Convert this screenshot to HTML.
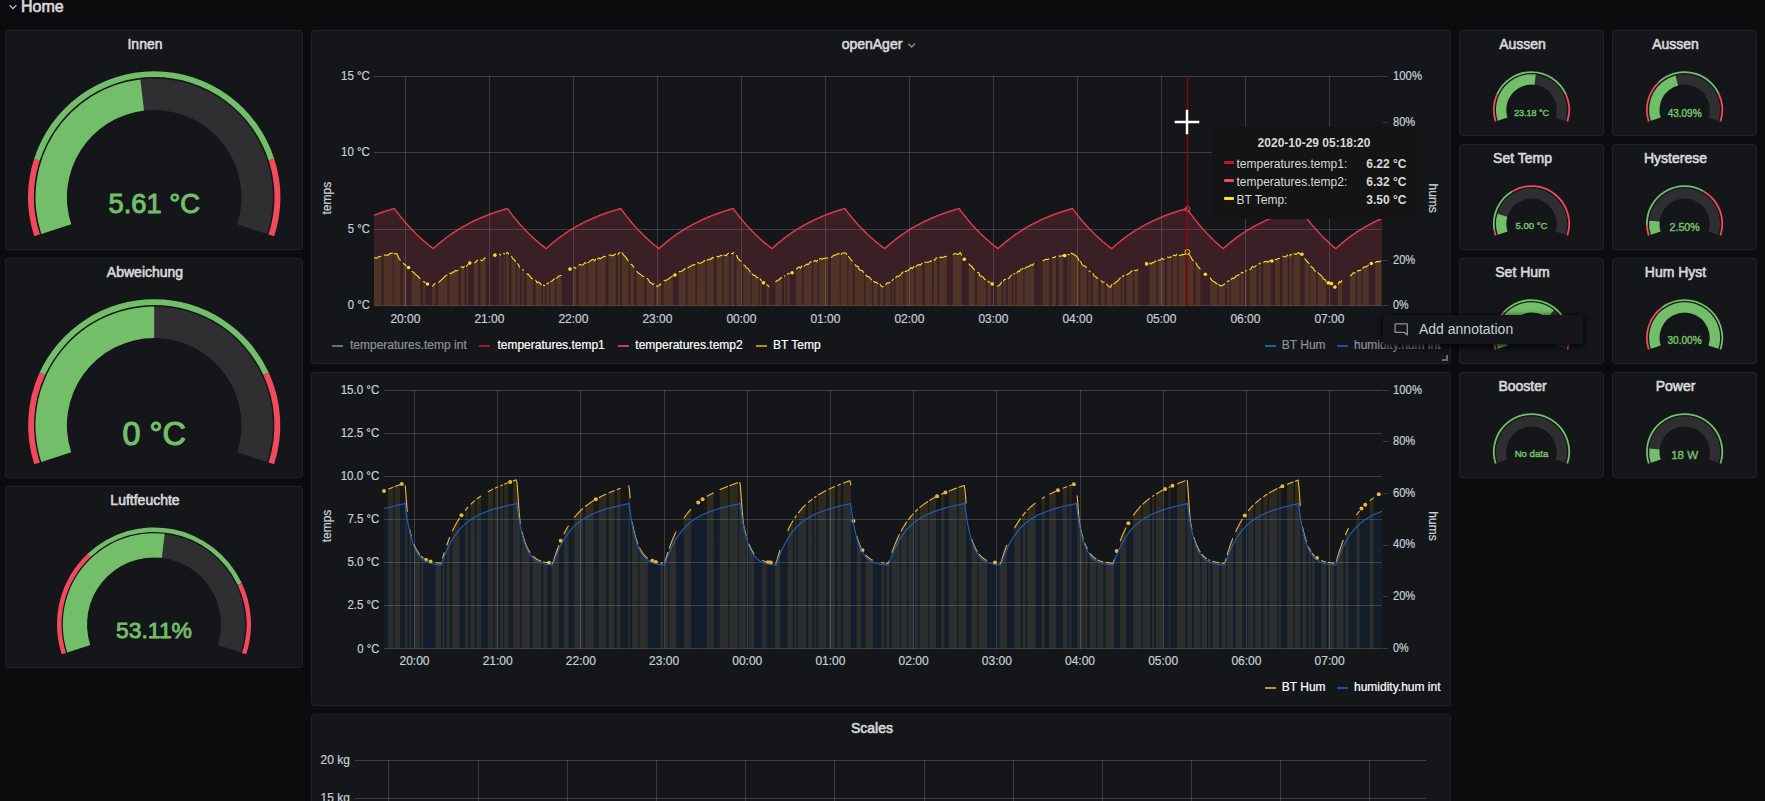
<!DOCTYPE html><html lang="en"><head><meta charset="utf-8"><title>openAger - Grafana</title><style>

html,body{margin:0;padding:0}
body{width:1765px;height:801px;overflow:hidden;background:#0b0c0e;font-family:"Liberation Sans", Arial, sans-serif;color:#d8d9da;position:relative;font-size:14px}
.panel{position:absolute;box-sizing:border-box;background:#141619;border:1px solid #202226;border-radius:3px;overflow:hidden}
.panel svg.pg{position:absolute;left:-1px;top:-1px;font-family:"Liberation Sans", Arial, sans-serif}
.ptitle{position:absolute;top:-1px;height:28px;line-height:29px;transform:translateX(-50%);white-space:nowrap;font-size:14px;color:#d8d9da;-webkit-text-stroke:0.6px #d8d9da;z-index:2}
.ptitle .caret{position:absolute;right:-13.5px;top:12.8px}
.row-title{position:absolute;left:21px;top:-3.5px;font-size:16px;line-height:20px;color:#d8d9da;-webkit-text-stroke:0.65px #d8d9da}
.legend{position:absolute;font-size:12px;line-height:16px;white-space:nowrap;color:#fff;-webkit-text-stroke:0.2px currentColor}
.legend span.i{position:absolute;height:2px;width:11px;opacity:.8}
.legend span.t{position:absolute}
.dim{color:#8e9297}
.tr{position:absolute;left:0;right:0;height:16px;line-height:16px}.tr i{position:absolute;left:12px;top:5px;width:10px;height:3px;border-radius:1px}.tr span{position:absolute;left:24.5px}.tr b{position:absolute;right:9.5px}

</style></head><body>
<svg style="position:absolute;left:9px;top:4px" width="9" height="6" viewBox="0 0 9 6"><path d="M0.6 1.1L4 4.6L7.4 1.1" fill="none" stroke="#c7d0d9" stroke-width="1.25"/></svg>
<div class="row-title">Home</div>
<div class="panel " style="left:5px;top:30px;width:298px;height:220px"><div class="ptitle" style="left:139px">Innen</div><svg class="pg" width="298" height="220" viewBox="5 30 298 220"><path d="M34.27 236.27A126.1 126.1 0 0 1 34.14 158.75L39.75 160.56A120.2 120.2 0 0 0 39.88 234.44Z" fill="#F2495C"/><path d="M34.14 158.75A126.1 126.1 0 0 1 274.26 158.75L268.65 160.56A120.2 120.2 0 0 0 39.75 160.56Z" fill="#73BF69"/><path d="M274.26 158.75A126.1 126.1 0 0 1 274.13 236.27L268.52 234.44A120.2 120.2 0 0 0 268.65 160.56Z" fill="#F2495C"/><path d="M41.31 233.98A118.7 118.7 0 1 1 267.09 233.98L237.23 224.28A87.3 87.3 0 1 0 71.17 224.28Z" fill="#2f2f32"/><path d="M41.31 233.98A118.7 118.7 0 0 1 140.36 79.41L144.02 110.6A87.3 87.3 0 0 0 71.17 224.28Z" fill="#73BF69"/><text x="154.2" y="213.1" text-anchor="middle" font-size="27.3" font-weight="normal" fill="#73BF69" stroke="#73BF69" stroke-width="1">5.61 °C</text></svg></div>
<div class="panel " style="left:5px;top:258px;width:298px;height:220px"><div class="ptitle" style="left:139px">Abweichung</div><svg class="pg" width="298" height="220" viewBox="5 258 298 220"><path d="M34.27 464.27A126.1 126.1 0 0 1 39.64 372.61L45 375.07A120.2 120.2 0 0 0 39.88 462.44Z" fill="#F2495C"/><path d="M39.64 372.61A126.1 126.1 0 0 1 268.76 372.61L263.4 375.07A120.2 120.2 0 0 0 45 375.07Z" fill="#73BF69"/><path d="M268.76 372.61A126.1 126.1 0 0 1 274.13 464.27L268.52 462.44A120.2 120.2 0 0 0 263.4 375.07Z" fill="#F2495C"/><path d="M41.31 461.98A118.7 118.7 0 1 1 267.09 461.98L237.23 452.28A87.3 87.3 0 1 0 71.17 452.28Z" fill="#2f2f32"/><path d="M41.31 461.98A118.7 118.7 0 0 1 154.2 306.6L154.2 338A87.3 87.3 0 0 0 71.17 452.28Z" fill="#73BF69"/><text x="154.2" y="444.6" text-anchor="middle" font-size="32.3" font-weight="normal" fill="#73BF69" stroke="#73BF69" stroke-width="1.15">0 °C</text></svg></div>
<div class="panel " style="left:5px;top:486px;width:298px;height:182px"><div class="ptitle" style="left:139px">Luftfeuchte</div><svg class="pg" width="298" height="182" viewBox="5 486 298 182"><path d="M61.75 654.37A97 97 0 0 1 87.6 553.69L90.68 556.97A92.5 92.5 0 0 0 66.03 652.98Z" fill="#F2495C"/><path d="M87.6 553.69A97 97 0 0 1 241.77 583.1L237.7 585.02A92.5 92.5 0 0 0 90.68 556.97Z" fill="#73BF69"/><path d="M241.77 583.1A97 97 0 0 1 246.25 654.37L241.97 652.98A92.5 92.5 0 0 0 237.7 585.02Z" fill="#F2495C"/><path d="M67.26 652.58A91.2 91.2 0 1 1 240.74 652.58L217.72 645.1A67 67 0 1 0 90.28 645.1Z" fill="#2f2f32"/><path d="M67.26 652.58A91.2 91.2 0 0 1 164.67 533.83L161.84 557.86A67 67 0 0 0 90.28 645.1Z" fill="#73BF69"/><text x="154" y="637.5" text-anchor="middle" font-size="22.9" font-weight="normal" fill="#73BF69" stroke="#73BF69" stroke-width="0.85">53.11%</text></svg></div>
<div class="panel " style="left:1459px;top:30px;width:145px;height:106px"><div class="ptitle" style="left:62.5px">Aussen</div><svg class="pg" width="145" height="106" viewBox="1459 30 145 106"><path d="M1494.79 121.73A38.6 38.6 0 0 1 1496.24 94.1L1497.88 94.83A36.8 36.8 0 0 0 1496.5 121.17Z" fill="#F2495C"/><path d="M1496.24 94.1A38.6 38.6 0 0 1 1566.76 94.1L1565.12 94.83A36.8 36.8 0 0 0 1497.88 94.83Z" fill="#73BF69"/><path d="M1566.76 94.1A38.6 38.6 0 0 1 1568.21 121.73L1566.5 121.17A36.8 36.8 0 0 0 1565.12 94.83Z" fill="#F2495C"/><path d="M1497.74 120.77A35.5 35.5 0 1 1 1565.26 120.77L1555.47 117.59A25.2 25.2 0 1 0 1507.53 117.59Z" fill="#2f2f32"/><path d="M1497.74 120.77A35.5 35.5 0 0 1 1535.77 74.56L1534.53 84.78A25.2 25.2 0 0 0 1507.53 117.59Z" fill="#73BF69"/><text x="1531.5" y="116" text-anchor="middle" font-size="9" font-weight="normal" fill="#73BF69" stroke="#73BF69" stroke-width="0.45">23.18 °C</text></svg></div>
<div class="panel " style="left:1612px;top:30px;width:145px;height:106px"><div class="ptitle" style="left:62.5px">Aussen</div><svg class="pg" width="145" height="106" viewBox="1612 30 145 106"><path d="M1647.89 121.73A38.6 38.6 0 0 1 1658.18 81.66L1659.41 82.97A36.8 36.8 0 0 0 1649.6 121.17Z" fill="#F2495C"/><path d="M1658.18 81.66A38.6 38.6 0 0 1 1719.53 93.36L1717.9 94.13A36.8 36.8 0 0 0 1659.41 82.97Z" fill="#73BF69"/><path d="M1719.53 93.36A38.6 38.6 0 0 1 1721.31 121.73L1719.6 121.17A36.8 36.8 0 0 0 1717.9 94.13Z" fill="#F2495C"/><path d="M1650.84 120.77A35.5 35.5 0 1 1 1718.36 120.77L1708.57 117.59A25.2 25.2 0 1 0 1660.63 117.59Z" fill="#2f2f32"/><path d="M1650.84 120.77A35.5 35.5 0 0 1 1675.46 75.5L1678.11 85.45A25.2 25.2 0 0 0 1660.63 117.59Z" fill="#73BF69"/><text x="1684.6" y="116.6" text-anchor="middle" font-size="10" font-weight="normal" fill="#73BF69" stroke="#73BF69" stroke-width="0.45">43.09%</text></svg></div>
<div class="panel " style="left:1459px;top:144px;width:145px;height:106px"><div class="ptitle" style="left:62.5px">Set Temp</div><svg class="pg" width="145" height="106" viewBox="1459 144 145 106"><path d="M1494.79 235.73A38.6 38.6 0 0 1 1493.38 229.84L1495.15 229.56A36.8 36.8 0 0 0 1496.5 235.17Z" fill="#F2495C"/><path d="M1493.38 229.84A38.6 38.6 0 0 1 1512.08 190.44L1512.99 191.99A36.8 36.8 0 0 0 1495.15 229.56Z" fill="#73BF69"/><path d="M1512.08 190.44A38.6 38.6 0 0 1 1568.21 235.73L1566.5 235.17A36.8 36.8 0 0 0 1512.99 191.99Z" fill="#F2495C"/><path d="M1497.74 234.77A35.5 35.5 0 1 1 1565.26 234.77L1555.47 231.59A25.2 25.2 0 1 0 1507.53 231.59Z" fill="#2f2f32"/><path d="M1497.74 234.77A35.5 35.5 0 0 1 1497.43 213.81L1507.32 216.71A25.2 25.2 0 0 0 1507.53 231.59Z" fill="#73BF69"/><text x="1531.5" y="229" text-anchor="middle" font-size="9.6" font-weight="normal" fill="#73BF69" stroke="#73BF69" stroke-width="0.45">5.00 °C</text></svg></div>
<div class="panel " style="left:1612px;top:144px;width:145px;height:106px"><div class="ptitle" style="left:62.5px">Hysterese</div><svg class="pg" width="145" height="106" viewBox="1612 144 145 106"><path d="M1647.89 235.73A38.6 38.6 0 0 1 1646.02 225.15L1647.82 225.08A36.8 36.8 0 0 0 1649.6 235.17Z" fill="#F2495C"/><path d="M1646.02 225.15A38.6 38.6 0 0 1 1704.02 190.44L1703.11 191.99A36.8 36.8 0 0 0 1647.82 225.08Z" fill="#73BF69"/><path d="M1704.02 190.44A38.6 38.6 0 0 1 1721.31 235.73L1719.6 235.17A36.8 36.8 0 0 0 1703.11 191.99Z" fill="#F2495C"/><path d="M1650.84 234.77A35.5 35.5 0 1 1 1718.36 234.77L1708.57 231.59A25.2 25.2 0 1 0 1660.63 231.59Z" fill="#2f2f32"/><path d="M1650.84 234.77A35.5 35.5 0 0 1 1649.24 220.64L1659.5 221.55A25.2 25.2 0 0 0 1660.63 231.59Z" fill="#73BF69"/><text x="1684.6" y="230.8" text-anchor="middle" font-size="10.6" font-weight="normal" fill="#73BF69" stroke="#73BF69" stroke-width="0.45">2.50%</text></svg></div>
<div class="panel " style="left:1459px;top:258px;width:145px;height:106px"><div class="ptitle" style="left:62.5px">Set Hum</div><svg class="pg" width="145" height="106" viewBox="1459 258 145 106"><path d="M1494.79 349.73A38.6 38.6 0 0 1 1503.27 311.47L1504.59 312.7A36.8 36.8 0 0 0 1496.5 349.17Z" fill="#F2495C"/><path d="M1503.27 311.47A38.6 38.6 0 0 1 1566.48 321.49L1564.85 322.25A36.8 36.8 0 0 0 1504.59 312.7Z" fill="#73BF69"/><path d="M1566.48 321.49A38.6 38.6 0 0 1 1568.21 349.73L1566.5 349.17A36.8 36.8 0 0 0 1564.85 322.25Z" fill="#F2495C"/><path d="M1497.74 348.77A35.5 35.5 0 1 1 1565.26 348.77L1555.47 345.59A25.2 25.2 0 1 0 1507.53 345.59Z" fill="#2f2f32"/><path d="M1497.74 348.77A35.5 35.5 0 0 1 1553.78 310.16L1547.32 318.18A25.2 25.2 0 0 0 1507.53 345.59Z" fill="#73BF69"/><text x="1531.5" y="343" text-anchor="middle" font-size="10" font-weight="normal" fill="#73BF69" stroke="#73BF69" stroke-width="0.45">70.00%</text></svg></div>
<div class="panel " style="left:1612px;top:258px;width:145px;height:106px"><div class="ptitle" style="left:62.5px">Hum Hyst</div><svg class="pg" width="145" height="106" viewBox="1612 258 145 106"><path d="M1647.89 349.73A38.6 38.6 0 0 1 1661.69 306.73L1662.76 308.18A36.8 36.8 0 0 0 1649.6 349.17Z" fill="#F2495C"/><path d="M1661.69 306.73A38.6 38.6 0 0 1 1721.31 349.73L1719.6 349.17A36.8 36.8 0 0 0 1662.76 308.18Z" fill="#73BF69"/><path d="M1650.84 348.77A35.5 35.5 0 1 1 1718.36 348.77L1708.57 345.59A25.2 25.2 0 1 0 1660.63 345.59Z" fill="#2f2f32"/><path d="M1650.84 348.77A35.5 35.5 0 1 1 1718.36 348.77L1708.57 345.59A25.2 25.2 0 1 0 1660.63 345.59Z" fill="#73BF69"/><text x="1684.6" y="344" text-anchor="middle" font-size="10.1" font-weight="normal" fill="#73BF69" stroke="#73BF69" stroke-width="0.45">30.00%</text></svg></div>
<div class="panel " style="left:1459px;top:372px;width:145px;height:106px"><div class="ptitle" style="left:62.5px">Booster</div><svg class="pg" width="145" height="106" viewBox="1459 372 145 106"><path d="M1494.79 463.73A38.6 38.6 0 1 1 1568.21 463.73L1566.5 463.17A36.8 36.8 0 1 0 1496.5 463.17Z" fill="#73BF69"/><path d="M1497.74 462.77A35.5 35.5 0 1 1 1565.26 462.77L1555.47 459.59A25.2 25.2 0 1 0 1507.53 459.59Z" fill="#2f2f32"/><text x="1531.5" y="457.2" text-anchor="middle" font-size="9.6" font-weight="normal" fill="#73BF69" stroke="#73BF69" stroke-width="0.45">No data</text></svg></div>
<div class="panel " style="left:1612px;top:372px;width:145px;height:106px"><div class="ptitle" style="left:62.5px">Power</div><svg class="pg" width="145" height="106" viewBox="1612 372 145 106"><path d="M1647.89 463.73A38.6 38.6 0 1 1 1721.31 463.73L1719.6 463.17A36.8 36.8 0 1 0 1649.6 463.17Z" fill="#73BF69"/><path d="M1650.84 462.77A35.5 35.5 0 1 1 1718.36 462.77L1708.57 459.59A25.2 25.2 0 1 0 1660.63 459.59Z" fill="#2f2f32"/><path d="M1650.84 462.77A35.5 35.5 0 0 1 1649.25 448.5L1659.51 449.46A25.2 25.2 0 0 0 1660.63 459.59Z" fill="#73BF69"/><text x="1684.6" y="459" text-anchor="middle" font-size="11.5" font-weight="normal" fill="#73BF69" stroke="#73BF69" stroke-width="0.45">18 W</text></svg></div>
<div class="panel " style="left:311px;top:30px;width:1140px;height:334px"><div class="ptitle" style="left:560px">openAger<svg class="caret" width="8" height="5" viewBox="0 0 8 5"><path d="M0.7 0.7L4 4L7.3 0.7" fill="none" stroke="#8e8e8e" stroke-width="1.3"/></svg></div><svg class="pg" width="1140" height="334" viewBox="311 30 1140 334"><path d="M374 76.5H1382" stroke="#c8c8c8" stroke-opacity="0.22" stroke-width="1"/><path d="M374 152.5H1382" stroke="#c8c8c8" stroke-opacity="0.22" stroke-width="1"/><path d="M374 229.5H1382" stroke="#c8c8c8" stroke-opacity="0.22" stroke-width="1"/><path d="M374 305.5H1382" stroke="#c8c8c8" stroke-opacity="0.22" stroke-width="1"/><path d="M405.5 76V306" stroke="#c8c8c8" stroke-opacity="0.22" stroke-width="1"/><path d="M489.5 76V306" stroke="#c8c8c8" stroke-opacity="0.22" stroke-width="1"/><path d="M573.5 76V306" stroke="#c8c8c8" stroke-opacity="0.22" stroke-width="1"/><path d="M657.5 76V306" stroke="#c8c8c8" stroke-opacity="0.22" stroke-width="1"/><path d="M741.5 76V306" stroke="#c8c8c8" stroke-opacity="0.22" stroke-width="1"/><path d="M825.5 76V306" stroke="#c8c8c8" stroke-opacity="0.22" stroke-width="1"/><path d="M909.5 76V306" stroke="#c8c8c8" stroke-opacity="0.22" stroke-width="1"/><path d="M993.5 76V306" stroke="#c8c8c8" stroke-opacity="0.22" stroke-width="1"/><path d="M1077.5 76V306" stroke="#c8c8c8" stroke-opacity="0.22" stroke-width="1"/><path d="M1161.5 76V306" stroke="#c8c8c8" stroke-opacity="0.22" stroke-width="1"/><path d="M1245.5 76V306" stroke="#c8c8c8" stroke-opacity="0.22" stroke-width="1"/><path d="M1329.5 76V306" stroke="#c8c8c8" stroke-opacity="0.22" stroke-width="1"/><path d="M1383 76.5H1388" stroke="#c8c8c8" stroke-opacity="0.22" stroke-width="1"/><path d="M1383 122.5H1388" stroke="#c8c8c8" stroke-opacity="0.22" stroke-width="1"/><path d="M1383 167.5H1388" stroke="#c8c8c8" stroke-opacity="0.22" stroke-width="1"/><path d="M1383 213.5H1388" stroke="#c8c8c8" stroke-opacity="0.22" stroke-width="1"/><path d="M1383 260.5H1388" stroke="#c8c8c8" stroke-opacity="0.22" stroke-width="1"/><path d="M1383 305.5H1388" stroke="#c8c8c8" stroke-opacity="0.22" stroke-width="1"/><path d="M374 215.18L375 214.79L376 214.41L377 214.04L378 213.67L379 213.31L380 212.95L381 212.6L382 212.25L383 211.91L384 211.58L385 211.25L386 210.93L387 210.61L388 210.29L389 209.98L390 209.68L391 209.38L392 209.09L393 208.8L394 208.51L394.4 208.4L395 209.22L396 210.57L397 211.91L398 213.22L399 214.51L400 215.78L401 217.03L402 218.26L403 219.47L404 220.66L405 221.84L406 223L407 224.13L408 225.25L409 226.36L410 227.45L411 228.51L412 229.57L413 230.6L414 231.63L415 232.63L416 233.62L417 234.59L418 235.55L419 236.5L420 237.43L421 238.34L422 239.24L423 240.13L424 241L425 241.86L426 242.71L427 243.54L428 244.36L429 245.17L430 245.96L431 246.75L432 247.52L433 248.27L433.3 248.5L434 247.85L435 246.94L436 246.05L437 245.17L438 244.3L439 243.45L440 242.61L441 241.78L442 240.97L443 240.17L444 239.39L445 238.61L446 237.85L447 237.1L448 236.36L449 235.64L450 234.92L451 234.22L452 233.53L453 232.85L454 232.18L455 231.52L456 230.87L457 230.23L458 229.6L459 228.99L460 228.38L461 227.78L462 227.19L463 226.61L464 226.04L465 225.48L466 224.93L467 224.39L468 223.85L469 223.33L470 222.81L471 222.3L472 221.8L473 221.31L474 220.82L475 220.35L476 219.88L477 219.41L478 218.96L479 218.51L480 218.07L481 217.64L482 217.21L483 216.79L484 216.38L485 215.97L486 215.57L487 215.18L488 214.79L489 214.41L490 214.04L491 213.67L492 213.31L493 212.95L494 212.6L495 212.25L496 211.91L497 211.58L498 211.25L499 210.93L500 210.61L501 210.29L502 209.98L503 209.68L504 209.38L505 209.09L506 208.8L507 208.51L507.4 208.4L508 209.22L509 210.58L510 211.91L511 213.22L512 214.52L513 215.79L514 217.04L515 218.28L516 219.49L517 220.69L518 221.86L519 223.02L520 224.16L521 225.29L522 226.39L523 227.48L524 228.55L525 229.61L526 230.65L527 231.67L528 232.68L529 233.67L530 234.64L531 235.6L532 236.55L533 237.48L534 238.4L535 239.3L536 240.19L537 241.06L538 241.92L539 242.77L540 243.61L541 244.43L542 245.24L543 246.03L544 246.82L545 247.59L546 248.35L546.2 248.5L547 247.76L548 246.86L549 245.97L550 245.09L551 244.23L552 243.38L553 242.54L554 241.72L555 240.91L556 240.12L557 239.33L558 238.56L559 237.8L560 237.06L561 236.32L562 235.6L563 234.89L564 234.19L565 233.5L566 232.82L567 232.16L568 231.5L569 230.86L570 230.22L571 229.59L572 228.98L573 228.37L574 227.78L575 227.19L576 226.62L577 226.05L578 225.49L579 224.94L580 224.4L581 223.87L582 223.35L583 222.83L584 222.32L585 221.83L586 221.33L587 220.85L588 220.38L589 219.91L590 219.45L591 219L592 218.55L593 218.11L594 217.68L595 217.26L596 216.84L597 216.43L598 216.02L599 215.63L600 215.23L601 214.85L602 214.47L603 214.1L604 213.73L605 213.37L606 213.01L607 212.66L608 212.32L609 211.98L610 211.65L611 211.32L612 211L613 210.68L614 210.37L615 210.06L616 209.76L617 209.46L618 209.17L619 208.88L620 208.6L620.7 208.4L621 208.82L622 210.19L623 211.54L624 212.88L625 214.19L626 215.48L627 216.75L628 218L629 219.23L630 220.44L631 221.64L632 222.81L633 223.97L634 225.11L635 226.23L636 227.33L637 228.42L638 229.49L639 230.54L640 231.58L641 232.6L642 233.61L643 234.6L644 235.57L645 236.53L646 237.48L647 238.41L648 239.32L649 240.22L650 241.11L651 241.98L652 242.84L653 243.69L654 244.52L655 245.34L656 246.15L657 246.95L658 247.73L659 248.5L660 247.58L661 246.68L662 245.79L663 244.91L664 244.05L665 243.2L666 242.37L667 241.54L668 240.74L669 239.94L670 239.16L671 238.39L672 237.63L673 236.89L674 236.15L675 235.43L676 234.72L677 234.02L678 233.33L679 232.66L680 231.99L681 231.33L682 230.69L683 230.06L684 229.43L685 228.82L686 228.21L687 227.62L688 227.03L689 226.46L690 225.89L691 225.33L692 224.78L693 224.24L694 223.71L695 223.19L696 222.67L697 222.17L698 221.67L699 221.18L700 220.7L701 220.22L702 219.76L703 219.3L704 218.84L705 218.4L706 217.96L707 217.53L708 217.11L709 216.69L710 216.28L711 215.88L712 215.48L713 215.09L714 214.7L715 214.32L716 213.95L717 213.58L718 213.22L719 212.87L720 212.52L721 212.18L722 211.84L723 211.51L724 211.18L725 210.86L726 210.54L727 210.23L728 209.92L729 209.62L730 209.32L731 209.03L732 208.74L733 208.46L733.2 208.4L734 209.5L735 210.85L736 212.18L737 213.48L738 214.77L739 216.04L740 217.29L741 218.52L742 219.73L743 220.92L744 222.1L745 223.25L746 224.39L747 225.51L748 226.61L749 227.7L750 228.76L751 229.82L752 230.85L753 231.87L754 232.88L755 233.86L756 234.84L757 235.79L758 236.74L759 237.66L760 238.58L761 239.48L762 240.36L763 241.24L764 242.09L765 242.94L766 243.77L767 244.59L768 245.4L769 246.19L770 246.97L771 247.74L772 248.5L773 247.57L774 246.66L775 245.76L776 244.87L777 244L778 243.15L779 242.3L780 241.47L781 240.66L782 239.86L783 239.06L784 238.29L785 237.52L786 236.77L787 236.03L788 235.3L789 234.58L790 233.88L791 233.18L792 232.5L793 231.83L794 231.16L795 230.51L796 229.87L797 229.24L798 228.62L799 228.01L800 227.41L801 226.82L802 226.24L803 225.66L804 225.1L805 224.55L806 224L807 223.46L808 222.94L809 222.42L810 221.91L811 221.4L812 220.91L813 220.42L814 219.94L815 219.47L816 219.01L817 218.55L818 218.1L819 217.66L820 217.22L821 216.79L822 216.37L823 215.96L824 215.55L825 215.15L826 214.75L827 214.37L828 213.98L829 213.61L830 213.24L831 212.87L832 212.51L833 212.16L834 211.81L835 211.47L836 211.14L837 210.8L838 210.48L839 210.16L840 209.84L841 209.53L842 209.23L843 208.93L844 208.63L844.8 208.4L845 208.67L846 210L847 211.32L848 212.61L849 213.88L850 215.13L851 216.37L852 217.58L853 218.78L854 219.95L855 221.11L856 222.25L857 223.38L858 224.48L859 225.57L860 226.64L861 227.7L862 228.73L863 229.76L864 230.76L865 231.75L866 232.73L867 233.69L868 234.64L869 235.57L870 236.48L871 237.39L872 238.27L873 239.15L874 240.01L875 240.86L876 241.69L877 242.51L878 243.32L879 244.12L880 244.9L881 245.67L882 246.43L883 247.18L884 247.92L884.8 248.5L885 248.32L886 247.4L887 246.5L888 245.61L889 244.74L890 243.88L891 243.04L892 242.2L893 241.39L894 240.58L895 239.79L896 239.01L897 238.24L898 237.49L899 236.75L900 236.01L901 235.3L902 234.59L903 233.89L904 233.21L905 232.53L906 231.87L907 231.22L908 230.57L909 229.94L910 229.32L911 228.71L912 228.11L913 227.51L914 226.93L915 226.36L916 225.79L917 225.24L918 224.69L919 224.15L920 223.62L921 223.1L922 222.59L923 222.09L924 221.59L925 221.1L926 220.62L927 220.15L928 219.68L929 219.23L930 218.78L931 218.33L932 217.9L933 217.47L934 217.05L935 216.63L936 216.22L937 215.82L938 215.42L939 215.03L940 214.65L941 214.27L942 213.9L943 213.54L944 213.18L945 212.82L946 212.48L947 212.13L948 211.8L949 211.46L950 211.14L951 210.82L952 210.5L953 210.19L954 209.89L955 209.58L956 209.29L957 209L958 208.71L959 208.43L959.1 208.4L960 209.63L961 210.98L962 212.3L963 213.6L964 214.89L965 216.15L966 217.4L967 218.62L968 219.83L969 221.02L970 222.19L971 223.34L972 224.47L973 225.59L974 226.69L975 227.77L976 228.83L977 229.88L978 230.91L979 231.93L980 232.93L981 233.91L982 234.88L983 235.84L984 236.78L985 237.7L986 238.61L987 239.51L988 240.39L989 241.26L990 242.12L991 242.96L992 243.79L993 244.6L994 245.41L995 246.2L996 246.98L997 247.75L998 248.5L999 247.58L1000 246.68L1001 245.79L1002 244.92L1003 244.06L1004 243.21L1005 242.38L1006 241.56L1007 240.75L1008 239.96L1009 239.18L1010 238.41L1011 237.65L1012 236.91L1013 236.18L1014 235.46L1015 234.75L1016 234.05L1017 233.36L1018 232.69L1019 232.02L1020 231.37L1021 230.73L1022 230.09L1023 229.47L1024 228.86L1025 228.25L1026 227.66L1027 227.08L1028 226.5L1029 225.94L1030 225.38L1031 224.83L1032 224.29L1033 223.76L1034 223.24L1035 222.73L1036 222.22L1037 221.73L1038 221.24L1039 220.76L1040 220.28L1041 219.82L1042 219.36L1043 218.91L1044 218.46L1045 218.03L1046 217.6L1047 217.17L1048 216.76L1049 216.35L1050 215.94L1051 215.55L1052 215.16L1053 214.77L1054 214.4L1055 214.02L1056 213.66L1057 213.3L1058 212.94L1059 212.59L1060 212.25L1061 211.91L1062 211.58L1063 211.26L1064 210.93L1065 210.62L1066 210.31L1067 210L1068 209.7L1069 209.4L1070 209.11L1071 208.82L1072 208.54L1072.5 208.4L1073 209.08L1074 210.43L1075 211.75L1076 213.06L1077 214.34L1078 215.61L1079 216.86L1080 218.08L1081 219.29L1082 220.48L1083 221.65L1084 222.8L1085 223.93L1086 225.05L1087 226.15L1088 227.23L1089 228.3L1090 229.35L1091 230.38L1092 231.4L1093 232.4L1094 233.38L1095 234.35L1096 235.31L1097 236.25L1098 237.17L1099 238.08L1100 238.98L1101 239.86L1102 240.73L1103 241.59L1104 242.43L1105 243.26L1106 244.08L1107 244.88L1108 245.68L1109 246.46L1110 247.22L1111 247.98L1111.7 248.5L1112 248.22L1113 247.32L1114 246.42L1115 245.54L1116 244.68L1117 243.82L1118 242.99L1119 242.16L1120 241.35L1121 240.55L1122 239.76L1123 238.99L1124 238.23L1125 237.48L1126 236.75L1127 236.02L1128 235.31L1129 234.6L1130 233.91L1131 233.23L1132 232.57L1133 231.91L1134 231.26L1135 230.62L1136 230L1137 229.38L1138 228.77L1139 228.17L1140 227.59L1141 227.01L1142 226.44L1143 225.88L1144 225.33L1145 224.78L1146 224.25L1147 223.73L1148 223.21L1149 222.7L1150 222.2L1151 221.71L1152 221.22L1153 220.75L1154 220.28L1155 219.82L1156 219.36L1157 218.92L1158 218.48L1159 218.04L1160 217.62L1161 217.2L1162 216.79L1163 216.38L1164 215.98L1165 215.59L1166 215.2L1167 214.82L1168 214.45L1169 214.08L1170 213.72L1171 213.36L1172 213.01L1173 212.66L1174 212.32L1175 211.99L1176 211.66L1177 211.34L1178 211.02L1179 210.71L1180 210.4L1181 210.09L1182 209.8L1183 209.5L1184 209.21L1185 208.93L1186 208.65L1186.9 208.4L1187 208.54L1188 209.98L1189 211.39L1190 212.78L1191 214.15L1192 215.5L1193 216.82L1194 218.13L1195 219.41L1196 220.68L1197 221.92L1198 223.15L1199 224.36L1200 225.55L1201 226.72L1202 227.87L1203 229L1204 230.12L1205 231.22L1206 232.3L1207 233.37L1208 234.42L1209 235.45L1210 236.47L1211 237.47L1212 238.45L1213 239.42L1214 240.38L1215 241.32L1216 242.24L1217 243.16L1218 244.05L1219 244.94L1220 245.81L1221 246.66L1222 247.51L1223 248.34L1223.2 248.5L1224 247.77L1225 246.88L1226 246L1227 245.13L1228 244.28L1229 243.44L1230 242.62L1231 241.81L1232 241.01L1233 240.22L1234 239.45L1235 238.69L1236 237.94L1237 237.2L1238 236.48L1239 235.77L1240 235.06L1241 234.37L1242 233.69L1243 233.02L1244 232.37L1245 231.72L1246 231.08L1247 230.45L1248 229.84L1249 229.23L1250 228.63L1251 228.04L1252 227.47L1253 226.9L1254 226.34L1255 225.79L1256 225.24L1257 224.71L1258 224.18L1259 223.67L1260 223.16L1261 222.66L1262 222.17L1263 221.68L1264 221.21L1265 220.74L1266 220.28L1267 219.82L1268 219.37L1269 218.93L1270 218.5L1271 218.08L1272 217.66L1273 217.25L1274 216.84L1275 216.44L1276 216.05L1277 215.66L1278 215.28L1279 214.91L1280 214.54L1281 214.18L1282 213.82L1283 213.47L1284 213.12L1285 212.78L1286 212.45L1287 212.12L1288 211.8L1289 211.48L1290 211.16L1291 210.86L1292 210.55L1293 210.25L1294 209.96L1295 209.67L1296 209.39L1297 209.11L1298 208.83L1299 208.56L1299.6 208.4L1300 208.98L1301 210.41L1302 211.82L1303 213.2L1304 214.57L1305 215.91L1306 217.23L1307 218.54L1308 219.82L1309 221.08L1310 222.32L1311 223.55L1312 224.75L1313 225.94L1314 227.1L1315 228.25L1316 229.38L1317 230.5L1318 231.59L1319 232.67L1320 233.74L1321 234.78L1322 235.81L1323 236.83L1324 237.82L1325 238.81L1326 239.78L1327 240.73L1328 241.67L1329 242.59L1330 243.5L1331 244.39L1332 245.27L1333 246.14L1334 247L1335 247.84L1335.8 248.5L1336 248.31L1337 247.4L1338 246.5L1339 245.61L1340 244.73L1341 243.87L1342 243.03L1343 242.2L1344 241.38L1345 240.57L1346 239.78L1347 239L1348 238.23L1349 237.47L1350 236.73L1351 236L1352 235.28L1353 234.57L1354 233.87L1355 233.19L1356 232.51L1357 231.85L1358 231.19L1359 230.55L1360 229.92L1361 229.29L1362 228.68L1363 228.08L1364 227.49L1365 226.9L1366 226.33L1367 225.76L1368 225.21L1369 224.66L1370 224.12L1371 223.59L1372 223.07L1373 222.55L1374 222.05L1375 221.55L1376 221.06L1377 220.58L1378 220.11L1379 219.64L1380 219.19L1381 218.73L1382 218.29L1382 305.5L374 305.5Z" fill="rgb(215,72,90)" fill-opacity="0.2"/><path d="M374 216.28L375 215.89L376 215.51L377 215.14L378 214.77L379 214.41L380 214.05L381 213.7L382 213.35L383 213.01L384 212.68L385 212.35L386 212.03L387 211.71L388 211.39L389 211.08L390 210.78L391 210.48L392 210.19L393 209.9L394 209.61L394.4 209.5L395 210.32L396 211.67L397 213.01L398 214.32L399 215.61L400 216.88L401 218.13L402 219.36L403 220.57L404 221.76L405 222.94L406 224.1L407 225.23L408 226.35L409 227.46L410 228.55L411 229.61L412 230.67L413 231.7L414 232.73L415 233.73L416 234.72L417 235.69L418 236.65L419 237.6L420 238.53L421 239.44L422 240.34L423 241.23L424 242.1L425 242.96L426 243.81L427 244.64L428 245.46L429 246.27L430 247.06L431 247.85L432 248.62L433 249.37L433.3 249.6L434 248.95L435 248.04L436 247.15L437 246.27L438 245.4L439 244.55L440 243.71L441 242.88L442 242.07L443 241.27L444 240.49L445 239.71L446 238.95L447 238.2L448 237.46L449 236.74L450 236.02L451 235.32L452 234.63L453 233.95L454 233.28L455 232.62L456 231.97L457 231.33L458 230.7L459 230.09L460 229.48L461 228.88L462 228.29L463 227.71L464 227.14L465 226.58L466 226.03L467 225.49L468 224.95L469 224.43L470 223.91L471 223.4L472 222.9L473 222.41L474 221.92L475 221.45L476 220.98L477 220.51L478 220.06L479 219.61L480 219.17L481 218.74L482 218.31L483 217.89L484 217.48L485 217.07L486 216.67L487 216.28L488 215.89L489 215.51L490 215.14L491 214.77L492 214.41L493 214.05L494 213.7L495 213.35L496 213.01L497 212.68L498 212.35L499 212.03L500 211.71L501 211.39L502 211.08L503 210.78L504 210.48L505 210.19L506 209.9L507 209.61L507.4 209.5L508 210.32L509 211.68L510 213.01L511 214.32L512 215.62L513 216.89L514 218.14L515 219.38L516 220.59L517 221.79L518 222.96L519 224.12L520 225.26L521 226.39L522 227.49L523 228.58L524 229.65L525 230.71L526 231.75L527 232.77L528 233.78L529 234.77L530 235.74L531 236.7L532 237.65L533 238.58L534 239.5L535 240.4L536 241.29L537 242.16L538 243.02L539 243.87L540 244.71L541 245.53L542 246.34L543 247.13L544 247.92L545 248.69L546 249.45L546.2 249.6L547 248.86L548 247.96L549 247.07L550 246.19L551 245.33L552 244.48L553 243.64L554 242.82L555 242.01L556 241.22L557 240.43L558 239.66L559 238.9L560 238.16L561 237.42L562 236.7L563 235.99L564 235.29L565 234.6L566 233.92L567 233.26L568 232.6L569 231.96L570 231.32L571 230.69L572 230.08L573 229.47L574 228.88L575 228.29L576 227.72L577 227.15L578 226.59L579 226.04L580 225.5L581 224.97L582 224.45L583 223.93L584 223.42L585 222.93L586 222.43L587 221.95L588 221.48L589 221.01L590 220.55L591 220.1L592 219.65L593 219.21L594 218.78L595 218.36L596 217.94L597 217.53L598 217.12L599 216.73L600 216.33L601 215.95L602 215.57L603 215.2L604 214.83L605 214.47L606 214.11L607 213.76L608 213.42L609 213.08L610 212.75L611 212.42L612 212.1L613 211.78L614 211.47L615 211.16L616 210.86L617 210.56L618 210.27L619 209.98L620 209.7L620.7 209.5L621 209.92L622 211.29L623 212.64L624 213.98L625 215.29L626 216.58L627 217.85L628 219.1L629 220.33L630 221.54L631 222.74L632 223.91L633 225.07L634 226.21L635 227.33L636 228.43L637 229.52L638 230.59L639 231.64L640 232.68L641 233.7L642 234.71L643 235.7L644 236.67L645 237.63L646 238.58L647 239.51L648 240.42L649 241.32L650 242.21L651 243.08L652 243.94L653 244.79L654 245.62L655 246.44L656 247.25L657 248.05L658 248.83L659 249.6L660 248.68L661 247.78L662 246.89L663 246.01L664 245.15L665 244.3L666 243.47L667 242.64L668 241.84L669 241.04L670 240.26L671 239.49L672 238.73L673 237.99L674 237.25L675 236.53L676 235.82L677 235.12L678 234.43L679 233.76L680 233.09L681 232.43L682 231.79L683 231.16L684 230.53L685 229.92L686 229.31L687 228.72L688 228.13L689 227.56L690 226.99L691 226.43L692 225.88L693 225.34L694 224.81L695 224.29L696 223.77L697 223.27L698 222.77L699 222.28L700 221.8L701 221.32L702 220.86L703 220.4L704 219.94L705 219.5L706 219.06L707 218.63L708 218.21L709 217.79L710 217.38L711 216.98L712 216.58L713 216.19L714 215.8L715 215.42L716 215.05L717 214.68L718 214.32L719 213.97L720 213.62L721 213.28L722 212.94L723 212.61L724 212.28L725 211.96L726 211.64L727 211.33L728 211.02L729 210.72L730 210.42L731 210.13L732 209.84L733 209.56L733.2 209.5L734 210.6L735 211.95L736 213.28L737 214.58L738 215.87L739 217.14L740 218.39L741 219.62L742 220.83L743 222.02L744 223.2L745 224.35L746 225.49L747 226.61L748 227.71L749 228.8L750 229.86L751 230.92L752 231.95L753 232.97L754 233.98L755 234.96L756 235.94L757 236.89L758 237.84L759 238.76L760 239.68L761 240.58L762 241.46L763 242.34L764 243.19L765 244.04L766 244.87L767 245.69L768 246.5L769 247.29L770 248.07L771 248.84L772 249.6L773 248.67L774 247.76L775 246.86L776 245.97L777 245.1L778 244.25L779 243.4L780 242.57L781 241.76L782 240.96L783 240.16L784 239.39L785 238.62L786 237.87L787 237.13L788 236.4L789 235.68L790 234.98L791 234.28L792 233.6L793 232.93L794 232.26L795 231.61L796 230.97L797 230.34L798 229.72L799 229.11L800 228.51L801 227.92L802 227.34L803 226.76L804 226.2L805 225.65L806 225.1L807 224.56L808 224.04L809 223.52L810 223.01L811 222.5L812 222.01L813 221.52L814 221.04L815 220.57L816 220.11L817 219.65L818 219.2L819 218.76L820 218.32L821 217.89L822 217.47L823 217.06L824 216.65L825 216.25L826 215.85L827 215.47L828 215.08L829 214.71L830 214.34L831 213.97L832 213.61L833 213.26L834 212.91L835 212.57L836 212.24L837 211.9L838 211.58L839 211.26L840 210.94L841 210.63L842 210.33L843 210.03L844 209.73L844.8 209.5L845 209.77L846 211.1L847 212.42L848 213.71L849 214.98L850 216.23L851 217.47L852 218.68L853 219.88L854 221.05L855 222.21L856 223.35L857 224.48L858 225.58L859 226.67L860 227.74L861 228.8L862 229.83L863 230.86L864 231.86L865 232.85L866 233.83L867 234.79L868 235.74L869 236.67L870 237.58L871 238.49L872 239.37L873 240.25L874 241.11L875 241.96L876 242.79L877 243.61L878 244.42L879 245.22L880 246L881 246.77L882 247.53L883 248.28L884 249.02L884.8 249.6L885 249.42L886 248.5L887 247.6L888 246.71L889 245.84L890 244.98L891 244.14L892 243.3L893 242.49L894 241.68L895 240.89L896 240.11L897 239.34L898 238.59L899 237.85L900 237.11L901 236.4L902 235.69L903 234.99L904 234.31L905 233.63L906 232.97L907 232.32L908 231.67L909 231.04L910 230.42L911 229.81L912 229.21L913 228.61L914 228.03L915 227.46L916 226.89L917 226.34L918 225.79L919 225.25L920 224.72L921 224.2L922 223.69L923 223.19L924 222.69L925 222.2L926 221.72L927 221.25L928 220.78L929 220.33L930 219.88L931 219.43L932 219L933 218.57L934 218.15L935 217.73L936 217.32L937 216.92L938 216.52L939 216.13L940 215.75L941 215.37L942 215L943 214.64L944 214.28L945 213.92L946 213.58L947 213.23L948 212.9L949 212.56L950 212.24L951 211.92L952 211.6L953 211.29L954 210.99L955 210.68L956 210.39L957 210.1L958 209.81L959 209.53L959.1 209.5L960 210.73L961 212.08L962 213.4L963 214.7L964 215.99L965 217.25L966 218.5L967 219.72L968 220.93L969 222.12L970 223.29L971 224.44L972 225.57L973 226.69L974 227.79L975 228.87L976 229.93L977 230.98L978 232.01L979 233.03L980 234.03L981 235.01L982 235.98L983 236.94L984 237.88L985 238.8L986 239.71L987 240.61L988 241.49L989 242.36L990 243.22L991 244.06L992 244.89L993 245.7L994 246.51L995 247.3L996 248.08L997 248.85L998 249.6L999 248.68L1000 247.78L1001 246.89L1002 246.02L1003 245.16L1004 244.31L1005 243.48L1006 242.66L1007 241.85L1008 241.06L1009 240.28L1010 239.51L1011 238.75L1012 238.01L1013 237.28L1014 236.56L1015 235.85L1016 235.15L1017 234.46L1018 233.79L1019 233.12L1020 232.47L1021 231.83L1022 231.19L1023 230.57L1024 229.96L1025 229.35L1026 228.76L1027 228.18L1028 227.6L1029 227.04L1030 226.48L1031 225.93L1032 225.39L1033 224.86L1034 224.34L1035 223.83L1036 223.32L1037 222.83L1038 222.34L1039 221.86L1040 221.38L1041 220.92L1042 220.46L1043 220.01L1044 219.56L1045 219.13L1046 218.7L1047 218.27L1048 217.86L1049 217.45L1050 217.04L1051 216.65L1052 216.26L1053 215.87L1054 215.5L1055 215.12L1056 214.76L1057 214.4L1058 214.04L1059 213.69L1060 213.35L1061 213.01L1062 212.68L1063 212.36L1064 212.03L1065 211.72L1066 211.41L1067 211.1L1068 210.8L1069 210.5L1070 210.21L1071 209.92L1072 209.64L1072.5 209.5L1073 210.18L1074 211.53L1075 212.85L1076 214.16L1077 215.44L1078 216.71L1079 217.96L1080 219.18L1081 220.39L1082 221.58L1083 222.75L1084 223.9L1085 225.03L1086 226.15L1087 227.25L1088 228.33L1089 229.4L1090 230.45L1091 231.48L1092 232.5L1093 233.5L1094 234.48L1095 235.45L1096 236.41L1097 237.35L1098 238.27L1099 239.18L1100 240.08L1101 240.96L1102 241.83L1103 242.69L1104 243.53L1105 244.36L1106 245.18L1107 245.98L1108 246.78L1109 247.56L1110 248.32L1111 249.08L1111.7 249.6L1112 249.32L1113 248.42L1114 247.52L1115 246.64L1116 245.78L1117 244.92L1118 244.09L1119 243.26L1120 242.45L1121 241.65L1122 240.86L1123 240.09L1124 239.33L1125 238.58L1126 237.85L1127 237.12L1128 236.41L1129 235.7L1130 235.01L1131 234.33L1132 233.67L1133 233.01L1134 232.36L1135 231.72L1136 231.1L1137 230.48L1138 229.87L1139 229.27L1140 228.69L1141 228.11L1142 227.54L1143 226.98L1144 226.43L1145 225.88L1146 225.35L1147 224.83L1148 224.31L1149 223.8L1150 223.3L1151 222.81L1152 222.32L1153 221.85L1154 221.38L1155 220.92L1156 220.46L1157 220.02L1158 219.58L1159 219.14L1160 218.72L1161 218.3L1162 217.89L1163 217.48L1164 217.08L1165 216.69L1166 216.3L1167 215.92L1168 215.55L1169 215.18L1170 214.82L1171 214.46L1172 214.11L1173 213.76L1174 213.42L1175 213.09L1176 212.76L1177 212.44L1178 212.12L1179 211.81L1180 211.5L1181 211.19L1182 210.9L1183 210.6L1184 210.31L1185 210.03L1186 209.75L1186.9 209.5L1187 209.64L1188 211.08L1189 212.49L1190 213.88L1191 215.25L1192 216.6L1193 217.92L1194 219.23L1195 220.51L1196 221.78L1197 223.02L1198 224.25L1199 225.46L1200 226.65L1201 227.82L1202 228.97L1203 230.1L1204 231.22L1205 232.32L1206 233.4L1207 234.47L1208 235.52L1209 236.55L1210 237.57L1211 238.57L1212 239.55L1213 240.52L1214 241.48L1215 242.42L1216 243.34L1217 244.26L1218 245.15L1219 246.04L1220 246.91L1221 247.76L1222 248.61L1223 249.44L1223.2 249.6L1224 248.87L1225 247.98L1226 247.1L1227 246.23L1228 245.38L1229 244.54L1230 243.72L1231 242.91L1232 242.11L1233 241.32L1234 240.55L1235 239.79L1236 239.04L1237 238.3L1238 237.58L1239 236.87L1240 236.16L1241 235.47L1242 234.79L1243 234.12L1244 233.47L1245 232.82L1246 232.18L1247 231.55L1248 230.94L1249 230.33L1250 229.73L1251 229.14L1252 228.57L1253 228L1254 227.44L1255 226.89L1256 226.34L1257 225.81L1258 225.28L1259 224.77L1260 224.26L1261 223.76L1262 223.27L1263 222.78L1264 222.31L1265 221.84L1266 221.38L1267 220.92L1268 220.47L1269 220.03L1270 219.6L1271 219.18L1272 218.76L1273 218.35L1274 217.94L1275 217.54L1276 217.15L1277 216.76L1278 216.38L1279 216.01L1280 215.64L1281 215.28L1282 214.92L1283 214.57L1284 214.22L1285 213.88L1286 213.55L1287 213.22L1288 212.9L1289 212.58L1290 212.26L1291 211.96L1292 211.65L1293 211.35L1294 211.06L1295 210.77L1296 210.49L1297 210.21L1298 209.93L1299 209.66L1299.6 209.5L1300 210.08L1301 211.51L1302 212.92L1303 214.3L1304 215.67L1305 217.01L1306 218.33L1307 219.64L1308 220.92L1309 222.18L1310 223.42L1311 224.65L1312 225.85L1313 227.04L1314 228.2L1315 229.35L1316 230.48L1317 231.6L1318 232.69L1319 233.77L1320 234.84L1321 235.88L1322 236.91L1323 237.93L1324 238.92L1325 239.91L1326 240.88L1327 241.83L1328 242.77L1329 243.69L1330 244.6L1331 245.49L1332 246.37L1333 247.24L1334 248.1L1335 248.94L1335.8 249.6L1336 249.41L1337 248.5L1338 247.6L1339 246.71L1340 245.83L1341 244.97L1342 244.13L1343 243.3L1344 242.48L1345 241.67L1346 240.88L1347 240.1L1348 239.33L1349 238.57L1350 237.83L1351 237.1L1352 236.38L1353 235.67L1354 234.97L1355 234.29L1356 233.61L1357 232.95L1358 232.29L1359 231.65L1360 231.02L1361 230.39L1362 229.78L1363 229.18L1364 228.59L1365 228L1366 227.43L1367 226.86L1368 226.31L1369 225.76L1370 225.22L1371 224.69L1372 224.17L1373 223.65L1374 223.15L1375 222.65L1376 222.16L1377 221.68L1378 221.21L1379 220.74L1380 220.29L1381 219.83L1382 219.39" fill="none" stroke="#C4162A" stroke-width="0.8" stroke-opacity="0.8" stroke-linejoin="round"/><path d="M374 215.18L375 214.79L376 214.41L377 214.04L378 213.67L379 213.31L380 212.95L381 212.6L382 212.25L383 211.91L384 211.58L385 211.25L386 210.93L387 210.61L388 210.29L389 209.98L390 209.68L391 209.38L392 209.09L393 208.8L394 208.51L394.4 208.4L395 209.22L396 210.57L397 211.91L398 213.22L399 214.51L400 215.78L401 217.03L402 218.26L403 219.47L404 220.66L405 221.84L406 223L407 224.13L408 225.25L409 226.36L410 227.45L411 228.51L412 229.57L413 230.6L414 231.63L415 232.63L416 233.62L417 234.59L418 235.55L419 236.5L420 237.43L421 238.34L422 239.24L423 240.13L424 241L425 241.86L426 242.71L427 243.54L428 244.36L429 245.17L430 245.96L431 246.75L432 247.52L433 248.27L433.3 248.5L434 247.85L435 246.94L436 246.05L437 245.17L438 244.3L439 243.45L440 242.61L441 241.78L442 240.97L443 240.17L444 239.39L445 238.61L446 237.85L447 237.1L448 236.36L449 235.64L450 234.92L451 234.22L452 233.53L453 232.85L454 232.18L455 231.52L456 230.87L457 230.23L458 229.6L459 228.99L460 228.38L461 227.78L462 227.19L463 226.61L464 226.04L465 225.48L466 224.93L467 224.39L468 223.85L469 223.33L470 222.81L471 222.3L472 221.8L473 221.31L474 220.82L475 220.35L476 219.88L477 219.41L478 218.96L479 218.51L480 218.07L481 217.64L482 217.21L483 216.79L484 216.38L485 215.97L486 215.57L487 215.18L488 214.79L489 214.41L490 214.04L491 213.67L492 213.31L493 212.95L494 212.6L495 212.25L496 211.91L497 211.58L498 211.25L499 210.93L500 210.61L501 210.29L502 209.98L503 209.68L504 209.38L505 209.09L506 208.8L507 208.51L507.4 208.4L508 209.22L509 210.58L510 211.91L511 213.22L512 214.52L513 215.79L514 217.04L515 218.28L516 219.49L517 220.69L518 221.86L519 223.02L520 224.16L521 225.29L522 226.39L523 227.48L524 228.55L525 229.61L526 230.65L527 231.67L528 232.68L529 233.67L530 234.64L531 235.6L532 236.55L533 237.48L534 238.4L535 239.3L536 240.19L537 241.06L538 241.92L539 242.77L540 243.61L541 244.43L542 245.24L543 246.03L544 246.82L545 247.59L546 248.35L546.2 248.5L547 247.76L548 246.86L549 245.97L550 245.09L551 244.23L552 243.38L553 242.54L554 241.72L555 240.91L556 240.12L557 239.33L558 238.56L559 237.8L560 237.06L561 236.32L562 235.6L563 234.89L564 234.19L565 233.5L566 232.82L567 232.16L568 231.5L569 230.86L570 230.22L571 229.59L572 228.98L573 228.37L574 227.78L575 227.19L576 226.62L577 226.05L578 225.49L579 224.94L580 224.4L581 223.87L582 223.35L583 222.83L584 222.32L585 221.83L586 221.33L587 220.85L588 220.38L589 219.91L590 219.45L591 219L592 218.55L593 218.11L594 217.68L595 217.26L596 216.84L597 216.43L598 216.02L599 215.63L600 215.23L601 214.85L602 214.47L603 214.1L604 213.73L605 213.37L606 213.01L607 212.66L608 212.32L609 211.98L610 211.65L611 211.32L612 211L613 210.68L614 210.37L615 210.06L616 209.76L617 209.46L618 209.17L619 208.88L620 208.6L620.7 208.4L621 208.82L622 210.19L623 211.54L624 212.88L625 214.19L626 215.48L627 216.75L628 218L629 219.23L630 220.44L631 221.64L632 222.81L633 223.97L634 225.11L635 226.23L636 227.33L637 228.42L638 229.49L639 230.54L640 231.58L641 232.6L642 233.61L643 234.6L644 235.57L645 236.53L646 237.48L647 238.41L648 239.32L649 240.22L650 241.11L651 241.98L652 242.84L653 243.69L654 244.52L655 245.34L656 246.15L657 246.95L658 247.73L659 248.5L660 247.58L661 246.68L662 245.79L663 244.91L664 244.05L665 243.2L666 242.37L667 241.54L668 240.74L669 239.94L670 239.16L671 238.39L672 237.63L673 236.89L674 236.15L675 235.43L676 234.72L677 234.02L678 233.33L679 232.66L680 231.99L681 231.33L682 230.69L683 230.06L684 229.43L685 228.82L686 228.21L687 227.62L688 227.03L689 226.46L690 225.89L691 225.33L692 224.78L693 224.24L694 223.71L695 223.19L696 222.67L697 222.17L698 221.67L699 221.18L700 220.7L701 220.22L702 219.76L703 219.3L704 218.84L705 218.4L706 217.96L707 217.53L708 217.11L709 216.69L710 216.28L711 215.88L712 215.48L713 215.09L714 214.7L715 214.32L716 213.95L717 213.58L718 213.22L719 212.87L720 212.52L721 212.18L722 211.84L723 211.51L724 211.18L725 210.86L726 210.54L727 210.23L728 209.92L729 209.62L730 209.32L731 209.03L732 208.74L733 208.46L733.2 208.4L734 209.5L735 210.85L736 212.18L737 213.48L738 214.77L739 216.04L740 217.29L741 218.52L742 219.73L743 220.92L744 222.1L745 223.25L746 224.39L747 225.51L748 226.61L749 227.7L750 228.76L751 229.82L752 230.85L753 231.87L754 232.88L755 233.86L756 234.84L757 235.79L758 236.74L759 237.66L760 238.58L761 239.48L762 240.36L763 241.24L764 242.09L765 242.94L766 243.77L767 244.59L768 245.4L769 246.19L770 246.97L771 247.74L772 248.5L773 247.57L774 246.66L775 245.76L776 244.87L777 244L778 243.15L779 242.3L780 241.47L781 240.66L782 239.86L783 239.06L784 238.29L785 237.52L786 236.77L787 236.03L788 235.3L789 234.58L790 233.88L791 233.18L792 232.5L793 231.83L794 231.16L795 230.51L796 229.87L797 229.24L798 228.62L799 228.01L800 227.41L801 226.82L802 226.24L803 225.66L804 225.1L805 224.55L806 224L807 223.46L808 222.94L809 222.42L810 221.91L811 221.4L812 220.91L813 220.42L814 219.94L815 219.47L816 219.01L817 218.55L818 218.1L819 217.66L820 217.22L821 216.79L822 216.37L823 215.96L824 215.55L825 215.15L826 214.75L827 214.37L828 213.98L829 213.61L830 213.24L831 212.87L832 212.51L833 212.16L834 211.81L835 211.47L836 211.14L837 210.8L838 210.48L839 210.16L840 209.84L841 209.53L842 209.23L843 208.93L844 208.63L844.8 208.4L845 208.67L846 210L847 211.32L848 212.61L849 213.88L850 215.13L851 216.37L852 217.58L853 218.78L854 219.95L855 221.11L856 222.25L857 223.38L858 224.48L859 225.57L860 226.64L861 227.7L862 228.73L863 229.76L864 230.76L865 231.75L866 232.73L867 233.69L868 234.64L869 235.57L870 236.48L871 237.39L872 238.27L873 239.15L874 240.01L875 240.86L876 241.69L877 242.51L878 243.32L879 244.12L880 244.9L881 245.67L882 246.43L883 247.18L884 247.92L884.8 248.5L885 248.32L886 247.4L887 246.5L888 245.61L889 244.74L890 243.88L891 243.04L892 242.2L893 241.39L894 240.58L895 239.79L896 239.01L897 238.24L898 237.49L899 236.75L900 236.01L901 235.3L902 234.59L903 233.89L904 233.21L905 232.53L906 231.87L907 231.22L908 230.57L909 229.94L910 229.32L911 228.71L912 228.11L913 227.51L914 226.93L915 226.36L916 225.79L917 225.24L918 224.69L919 224.15L920 223.62L921 223.1L922 222.59L923 222.09L924 221.59L925 221.1L926 220.62L927 220.15L928 219.68L929 219.23L930 218.78L931 218.33L932 217.9L933 217.47L934 217.05L935 216.63L936 216.22L937 215.82L938 215.42L939 215.03L940 214.65L941 214.27L942 213.9L943 213.54L944 213.18L945 212.82L946 212.48L947 212.13L948 211.8L949 211.46L950 211.14L951 210.82L952 210.5L953 210.19L954 209.89L955 209.58L956 209.29L957 209L958 208.71L959 208.43L959.1 208.4L960 209.63L961 210.98L962 212.3L963 213.6L964 214.89L965 216.15L966 217.4L967 218.62L968 219.83L969 221.02L970 222.19L971 223.34L972 224.47L973 225.59L974 226.69L975 227.77L976 228.83L977 229.88L978 230.91L979 231.93L980 232.93L981 233.91L982 234.88L983 235.84L984 236.78L985 237.7L986 238.61L987 239.51L988 240.39L989 241.26L990 242.12L991 242.96L992 243.79L993 244.6L994 245.41L995 246.2L996 246.98L997 247.75L998 248.5L999 247.58L1000 246.68L1001 245.79L1002 244.92L1003 244.06L1004 243.21L1005 242.38L1006 241.56L1007 240.75L1008 239.96L1009 239.18L1010 238.41L1011 237.65L1012 236.91L1013 236.18L1014 235.46L1015 234.75L1016 234.05L1017 233.36L1018 232.69L1019 232.02L1020 231.37L1021 230.73L1022 230.09L1023 229.47L1024 228.86L1025 228.25L1026 227.66L1027 227.08L1028 226.5L1029 225.94L1030 225.38L1031 224.83L1032 224.29L1033 223.76L1034 223.24L1035 222.73L1036 222.22L1037 221.73L1038 221.24L1039 220.76L1040 220.28L1041 219.82L1042 219.36L1043 218.91L1044 218.46L1045 218.03L1046 217.6L1047 217.17L1048 216.76L1049 216.35L1050 215.94L1051 215.55L1052 215.16L1053 214.77L1054 214.4L1055 214.02L1056 213.66L1057 213.3L1058 212.94L1059 212.59L1060 212.25L1061 211.91L1062 211.58L1063 211.26L1064 210.93L1065 210.62L1066 210.31L1067 210L1068 209.7L1069 209.4L1070 209.11L1071 208.82L1072 208.54L1072.5 208.4L1073 209.08L1074 210.43L1075 211.75L1076 213.06L1077 214.34L1078 215.61L1079 216.86L1080 218.08L1081 219.29L1082 220.48L1083 221.65L1084 222.8L1085 223.93L1086 225.05L1087 226.15L1088 227.23L1089 228.3L1090 229.35L1091 230.38L1092 231.4L1093 232.4L1094 233.38L1095 234.35L1096 235.31L1097 236.25L1098 237.17L1099 238.08L1100 238.98L1101 239.86L1102 240.73L1103 241.59L1104 242.43L1105 243.26L1106 244.08L1107 244.88L1108 245.68L1109 246.46L1110 247.22L1111 247.98L1111.7 248.5L1112 248.22L1113 247.32L1114 246.42L1115 245.54L1116 244.68L1117 243.82L1118 242.99L1119 242.16L1120 241.35L1121 240.55L1122 239.76L1123 238.99L1124 238.23L1125 237.48L1126 236.75L1127 236.02L1128 235.31L1129 234.6L1130 233.91L1131 233.23L1132 232.57L1133 231.91L1134 231.26L1135 230.62L1136 230L1137 229.38L1138 228.77L1139 228.17L1140 227.59L1141 227.01L1142 226.44L1143 225.88L1144 225.33L1145 224.78L1146 224.25L1147 223.73L1148 223.21L1149 222.7L1150 222.2L1151 221.71L1152 221.22L1153 220.75L1154 220.28L1155 219.82L1156 219.36L1157 218.92L1158 218.48L1159 218.04L1160 217.62L1161 217.2L1162 216.79L1163 216.38L1164 215.98L1165 215.59L1166 215.2L1167 214.82L1168 214.45L1169 214.08L1170 213.72L1171 213.36L1172 213.01L1173 212.66L1174 212.32L1175 211.99L1176 211.66L1177 211.34L1178 211.02L1179 210.71L1180 210.4L1181 210.09L1182 209.8L1183 209.5L1184 209.21L1185 208.93L1186 208.65L1186.9 208.4L1187 208.54L1188 209.98L1189 211.39L1190 212.78L1191 214.15L1192 215.5L1193 216.82L1194 218.13L1195 219.41L1196 220.68L1197 221.92L1198 223.15L1199 224.36L1200 225.55L1201 226.72L1202 227.87L1203 229L1204 230.12L1205 231.22L1206 232.3L1207 233.37L1208 234.42L1209 235.45L1210 236.47L1211 237.47L1212 238.45L1213 239.42L1214 240.38L1215 241.32L1216 242.24L1217 243.16L1218 244.05L1219 244.94L1220 245.81L1221 246.66L1222 247.51L1223 248.34L1223.2 248.5L1224 247.77L1225 246.88L1226 246L1227 245.13L1228 244.28L1229 243.44L1230 242.62L1231 241.81L1232 241.01L1233 240.22L1234 239.45L1235 238.69L1236 237.94L1237 237.2L1238 236.48L1239 235.77L1240 235.06L1241 234.37L1242 233.69L1243 233.02L1244 232.37L1245 231.72L1246 231.08L1247 230.45L1248 229.84L1249 229.23L1250 228.63L1251 228.04L1252 227.47L1253 226.9L1254 226.34L1255 225.79L1256 225.24L1257 224.71L1258 224.18L1259 223.67L1260 223.16L1261 222.66L1262 222.17L1263 221.68L1264 221.21L1265 220.74L1266 220.28L1267 219.82L1268 219.37L1269 218.93L1270 218.5L1271 218.08L1272 217.66L1273 217.25L1274 216.84L1275 216.44L1276 216.05L1277 215.66L1278 215.28L1279 214.91L1280 214.54L1281 214.18L1282 213.82L1283 213.47L1284 213.12L1285 212.78L1286 212.45L1287 212.12L1288 211.8L1289 211.48L1290 211.16L1291 210.86L1292 210.55L1293 210.25L1294 209.96L1295 209.67L1296 209.39L1297 209.11L1298 208.83L1299 208.56L1299.6 208.4L1300 208.98L1301 210.41L1302 211.82L1303 213.2L1304 214.57L1305 215.91L1306 217.23L1307 218.54L1308 219.82L1309 221.08L1310 222.32L1311 223.55L1312 224.75L1313 225.94L1314 227.1L1315 228.25L1316 229.38L1317 230.5L1318 231.59L1319 232.67L1320 233.74L1321 234.78L1322 235.81L1323 236.83L1324 237.82L1325 238.81L1326 239.78L1327 240.73L1328 241.67L1329 242.59L1330 243.5L1331 244.39L1332 245.27L1333 246.14L1334 247L1335 247.84L1335.8 248.5L1336 248.31L1337 247.4L1338 246.5L1339 245.61L1340 244.73L1341 243.87L1342 243.03L1343 242.2L1344 241.38L1345 240.57L1346 239.78L1347 239L1348 238.23L1349 237.47L1350 236.73L1351 236L1352 235.28L1353 234.57L1354 233.87L1355 233.19L1356 232.51L1357 231.85L1358 231.19L1359 230.55L1360 229.92L1361 229.29L1362 228.68L1363 228.08L1364 227.49L1365 226.9L1366 226.33L1367 225.76L1368 225.21L1369 224.66L1370 224.12L1371 223.59L1372 223.07L1373 222.55L1374 222.05L1375 221.55L1376 221.06L1377 220.58L1378 220.11L1379 219.64L1380 219.19L1381 218.73L1382 218.29" fill="none" stroke="#F2495C" stroke-width="1.15" stroke-opacity="0.92" stroke-linejoin="round"/><path d="M374 258.02L375.49 257.83L376.97 258.22L378.46 256.81L379.95 256.52L381.43 256.31L381.43 305.5L374 305.5ZM383.87 254.83L385.35 255.2L386.83 255.13L388.3 255.16L389.78 253.3L391.26 253.45L392.74 252.68L392.74 305.5L383.87 305.5ZM393.8 254.05L395.47 253.47L397.14 253.99L398.82 258.28L400.49 260.38L400.49 305.5L393.8 305.5ZM403.11 262.87L404.85 264.77L406.58 265.67L406.58 305.5L403.11 305.5ZM411.6 271.55L413.07 271.89L414.55 273.49L416.02 274.88L417.49 275.64L418.96 277.77L420.43 278.86L420.43 305.5L411.6 305.5ZM422.81 281.5L424.12 281.7L425.42 282.86L425.42 305.5L422.81 305.5ZM432.21 286.51L433.82 284.75L435.44 283.08L435.44 305.5L432.21 305.5ZM438.2 282.57L439.74 281.45L441.27 280.03L442.8 278.68L444.33 276.8L445.86 275.62L447.4 274.79L447.4 305.5L438.2 305.5ZM449.37 273.12L450.87 273.76L452.38 272.1L453.88 272.25L455.39 270.43L456.89 270.9L458.39 269.89L458.39 305.5L449.37 305.5ZM460.64 266.93L461.93 266.78L463.23 267.72L464.53 266.17L464.53 305.5L460.64 305.5ZM466.18 266.57L468.2 264.43L468.2 305.5L466.18 305.5ZM473.94 262.69L475.26 262.53L476.59 260.94L477.92 260.08L477.92 305.5L473.94 305.5ZM480.39 259.79L481.73 260.74L483.06 259.87L484.4 258.05L485.74 257.93L485.74 305.5L480.39 305.5ZM499.28 253.99L500.93 255.25L500.93 305.5L499.28 305.5ZM503.35 253.36L504.92 253.88L504.92 305.5L503.35 305.5ZM506 253.41L507.54 252.54L509.07 254.04L509.07 305.5L506 305.5ZM511.43 255.92L512.85 258.88L514.27 259.5L515.69 261.88L515.69 305.5L511.43 305.5ZM517.33 263.32L518.51 264.77L519.69 267.6L519.69 305.5L517.33 305.5ZM522.04 269.68L523.83 270.35L523.83 305.5L522.04 305.5ZM526.54 274.15L528.13 274.09L529.73 275.85L531.33 278.17L532.92 278.95L532.92 305.5L526.54 305.5ZM535.57 279.74L537.04 282.73L538.5 282.02L539.97 283.09L541.44 285.15L541.44 305.5L535.57 305.5ZM543 285.13L545.12 285.7L545.12 305.5L543 305.5ZM546.39 284.18L547.79 283.1L549.18 283.11L549.18 305.5L546.39 305.5ZM550.27 281.54L551.85 281.16L553.44 279.52L555.02 278.61L555.02 305.5L550.27 305.5ZM556.45 278.76L558.16 276.59L559.88 275.71L561.59 275.3L561.59 305.5L556.45 305.5ZM573.75 267.21L575.02 268.27L576.29 267.49L576.29 305.5L573.75 305.5ZM578.61 265.21L580.17 264.41L581.73 264.97L583.29 264.79L584.85 262.54L586.41 263.61L586.41 305.5L578.61 305.5ZM587.61 263.02L588.98 261.91L590.36 261.03L591.73 259.86L593.11 259.26L594.49 260.85L595.86 258.82L595.86 305.5L587.61 305.5ZM597.39 259.37L598.78 257.98L600.17 258.82L601.55 257.93L602.94 256.88L604.33 256.25L605.71 257.09L605.71 305.5L597.39 305.5ZM608.47 254.96L609.94 254.96L611.4 255.34L612.87 255.65L614.34 254.81L615.8 253.76L615.8 305.5L608.47 305.5ZM617.67 254.77L619 252.93L620.34 252.25L620.34 305.5L617.67 305.5ZM622.02 252.52L623.65 255.18L625.28 256.51L626.9 258.86L628.53 261.29L628.53 305.5L622.02 305.5ZM630.43 263.98L632.27 265.09L634.11 267.57L634.11 305.5L630.43 305.5ZM636.52 271.19L638.08 272.9L639.63 273.65L641.19 275.12L642.75 276.23L644.31 276.55L644.31 305.5L636.52 305.5ZM646.7 278.21L648.22 279.32L649.73 282.38L651.25 282.98L652.76 284.57L654.28 283.48L654.28 305.5L646.7 305.5ZM655.93 285.86L657.28 286.33L658.63 286.08L659.97 284.09L661.32 284.53L661.32 305.5L655.93 305.5ZM663.7 280.69L665.21 280.62L666.73 279.97L668.24 279.29L669.75 277.92L671.26 276.87L672.77 276.11L672.77 305.5L663.7 305.5ZM678.81 271.6L680.18 271.58L681.55 271.32L682.93 270.54L684.3 268.85L685.68 269L685.68 305.5L678.81 305.5ZM687.51 268.28L689.09 266.92L690.66 266.33L692.24 265.11L693.82 264.89L695.39 264.3L695.39 305.5L687.51 305.5ZM697.02 262.49L698.64 263.1L700.27 263.27L701.89 262.44L703.52 261.54L705.14 260.24L705.14 305.5L697.02 305.5ZM706.77 260.46L708.18 259.68L709.58 258.93L710.98 259.39L712.38 257.31L713.78 258.38L713.78 305.5L706.77 305.5ZM716.54 256.04L717.97 256.91L719.41 256.28L720.84 255.37L722.27 256.05L722.27 305.5L716.54 305.5ZM723.57 255.3L724.9 255.25L726.23 255.63L727.56 253.87L728.89 253.05L728.89 305.5L723.57 305.5ZM731.13 253.22L732.57 253.76L734.01 252.44L734.01 305.5L731.13 305.5ZM736.41 254.91L738.04 258.67L739.66 260.18L741.28 261.67L741.28 305.5L736.41 305.5ZM743.4 265.13L744.86 265.5L746.31 267.79L747.76 268.27L749.21 270.22L750.67 272.44L750.67 305.5L743.4 305.5ZM751.72 273.66L753.39 275.09L755.07 275.44L756.74 277.26L758.42 278L758.42 305.5L751.72 305.5ZM759.81 278.67L761.65 280.81L761.65 305.5L759.81 305.5ZM766.33 284.74L767.8 285.36L769.28 286.78L769.28 305.5L766.33 305.5ZM775.49 282.01L777.09 280.57L778.69 280.02L780.29 278.51L781.88 277.28L781.88 305.5L775.49 305.5ZM783.95 276.35L785.45 275.85L785.45 305.5L783.95 305.5ZM787.18 274.49L788.39 273.37L789.6 273.81L789.6 305.5L787.18 305.5ZM796.13 269.38L797.6 267.81L799.06 266.99L800.53 268.14L801.99 265.63L801.99 305.5L796.13 305.5ZM803.61 266.37L805.22 265.36L806.82 264.1L808.43 264.5L810.04 262.16L811.65 261.8L811.65 305.5L803.61 305.5ZM813.41 261.84L814.89 260.35L816.38 261.6L817.86 259.79L817.86 305.5L813.41 305.5ZM819.12 259.16L820.65 258.45L822.17 259.25L823.7 258.38L825.22 258.33L826.75 257.95L828.28 257.85L828.28 305.5L819.12 305.5ZM831.02 257.45L832.46 256.47L833.9 255.04L835.34 255.29L836.78 254.3L838.23 253.59L839.67 254.28L839.67 305.5L831.02 305.5ZM840.67 254.6L842.27 253.07L843.88 252.94L845.48 252.78L847.09 254.79L847.09 305.5L840.67 305.5ZM848.34 256.06L849.85 258.2L851.35 260.37L852.85 261.36L852.85 305.5L848.34 305.5ZM854.63 264.27L856.17 266.21L857.72 266.04L859.27 269.47L860.81 270.52L862.36 270.67L863.91 272.78L863.91 305.5L854.63 305.5ZM865.59 274.62L867.16 276.55L868.72 276.63L870.29 278.26L871.86 280.1L871.86 305.5L865.59 305.5ZM873.32 280.97L874.93 282.4L876.54 282.4L878.15 283.83L878.15 305.5L873.32 305.5ZM879.72 283.81L880.99 285.69L882.25 286.62L883.51 286.63L883.51 305.5L879.72 305.5ZM885.37 285.29L887.06 282.85L888.74 283.08L890.42 282.01L890.42 305.5L885.37 305.5ZM891.95 280.91L893.55 278.83L893.55 305.5L891.95 305.5ZM895.51 278.07L897.06 276.03L898.61 276.35L900.17 275.28L901.72 273.24L903.27 271.76L903.27 305.5L895.51 305.5ZM904.71 271.74L906.28 271.13L907.85 270.78L909.42 269.36L910.98 267.57L912.55 268.53L914.12 266.16L914.12 305.5L904.71 305.5ZM915.65 267.09L917.31 264.97L918.98 264.62L920.64 264.93L922.31 262.84L922.31 305.5L915.65 305.5ZM924.39 262.05L925.91 262.3L927.43 262.2L928.94 261.93L930.46 261.08L931.98 261.14L931.98 305.5L924.39 305.5ZM933.52 259.64L934.81 260.24L936.1 257.95L937.39 257.86L937.39 305.5L933.52 305.5ZM939.35 257.97L940.84 257.03L942.33 257.59L943.82 257L945.32 256.36L946.81 256.7L946.81 305.5L939.35 305.5ZM952.88 254.66L954.35 253.8L955.82 253.64L957.3 254.36L958.77 254.19L960.24 252.39L961.71 255.59L961.71 305.5L952.88 305.5ZM968.76 263.68L970.28 265.5L971.81 266.33L973.34 268.65L974.86 270.11L974.86 305.5L968.76 305.5ZM977.14 272.5L978.6 272.56L980.07 275.92L981.53 276.16L983 277.11L984.46 279.14L985.93 279.73L985.93 305.5L977.14 305.5ZM987.62 280.8L989.16 282.32L990.7 281.98L990.7 305.5L987.62 305.5ZM996.82 286.04L998.47 285.89L1000.13 284.51L1001.78 281.81L1001.78 305.5L996.82 305.5ZM1003.3 281.14L1004.62 279.42L1005.94 279.17L1005.94 305.5L1003.3 305.5ZM1007.8 278.74L1009.18 278.01L1010.57 276.19L1011.95 274.97L1011.95 305.5L1007.8 305.5ZM1013.22 273.92L1015.27 273.64L1015.27 305.5L1013.22 305.5ZM1016.68 273.51L1018.05 271L1019.41 271.69L1020.77 269.3L1022.13 268.98L1023.49 268.37L1023.49 305.5L1016.68 305.5ZM1024.54 268.87L1026.12 267.31L1027.7 266.65L1029.28 266.52L1030.86 264.7L1032.45 265.4L1034.03 263.42L1034.03 305.5L1024.54 305.5ZM1042.66 261.05L1044.32 259.92L1045.99 259.26L1047.66 259.46L1049.32 258.75L1049.32 305.5L1042.66 305.5ZM1052.04 257.81L1053.32 257.54L1054.6 257.44L1055.88 256.28L1055.88 305.5L1052.04 305.5ZM1058.53 255.69L1060.13 256.23L1061.74 255.86L1063.34 255.25L1063.34 305.5L1058.53 305.5ZM1067.4 254.53L1069.48 254.63L1069.48 305.5L1067.4 305.5ZM1070.58 253.04L1072 253.87L1073.42 253.75L1074.84 255.33L1076.27 255.95L1077.69 257.79L1079.11 260.9L1079.11 305.5L1070.58 305.5ZM1080.35 260.85L1081.93 264.4L1083.5 265.93L1085.08 265.97L1086.65 267.83L1086.65 305.5L1080.35 305.5ZM1088.53 270.77L1090.48 271.59L1090.48 305.5L1088.53 305.5ZM1092.73 273.26L1094.12 276.06L1095.51 276.31L1096.89 278.23L1098.28 277.84L1098.28 305.5L1092.73 305.5ZM1100.92 280.39L1102.72 282.27L1104.53 282L1104.53 305.5L1100.92 305.5ZM1106.52 283.67L1107.93 285.58L1109.34 286.91L1110.75 287.08L1112.15 284.06L1112.15 305.5L1106.52 305.5ZM1113.4 283.94L1114.87 283.36L1116.35 281.69L1117.83 281.02L1119.31 278.89L1120.79 277.61L1120.79 305.5L1113.4 305.5ZM1122.11 276.8L1124.29 275.24L1124.29 305.5L1122.11 305.5ZM1126.5 275.01L1128.06 274L1129.62 273.21L1131.19 271.4L1132.75 270.63L1132.75 305.5L1126.5 305.5ZM1134.18 269.92L1135.54 270.62L1136.9 270.26L1138.26 269.45L1138.26 305.5L1134.18 305.5ZM1149.47 262.68L1150.86 264.1L1152.25 262.5L1153.64 262.66L1155.03 261.2L1156.42 261.03L1156.42 305.5L1149.47 305.5ZM1157.83 260.67L1159.19 260.03L1160.55 259.97L1161.92 258.26L1163.28 259.36L1164.65 259.27L1164.65 305.5L1157.83 305.5ZM1167.12 257.11L1168.57 257.31L1170.01 257.56L1171.46 256.45L1171.46 305.5L1167.12 305.5ZM1172.88 255.63L1174.31 255.21L1175.74 255.63L1177.17 254.21L1177.17 305.5L1172.88 305.5ZM1178.86 255.76L1180.53 255.19L1182.21 254.63L1183.88 254.63L1185.55 253.79L1185.55 305.5L1178.86 305.5ZM1188 252.83L1189.41 254.97L1190.82 256.75L1192.23 259.72L1193.64 261.17L1193.64 305.5L1188 305.5ZM1195.7 262.57L1197.26 265.87L1198.81 267.3L1200.37 269.1L1200.37 305.5L1195.7 305.5ZM1210.07 277.67L1211.59 280.02L1213.11 281.21L1214.62 281.98L1216.14 283.28L1217.66 284.36L1217.66 305.5L1210.07 305.5ZM1218.66 284.27L1220.27 286.06L1221.88 285.4L1223.5 284.7L1225.11 283.71L1225.11 305.5L1218.66 305.5ZM1226.88 281.36L1228.25 281.11L1229.62 280.75L1229.62 305.5L1226.88 305.5ZM1230.91 279.82L1232.33 277.99L1233.76 278.61L1235.18 277.08L1236.6 275.47L1238.03 275.31L1239.45 274.26L1239.45 305.5L1230.91 305.5ZM1240.72 273.45L1242.12 272.34L1243.52 272.92L1243.52 305.5L1240.72 305.5ZM1245.03 271.32L1246.79 270.54L1246.79 305.5L1245.03 305.5ZM1249.45 269.36L1250.85 269.17L1252.26 266.41L1253.66 267.09L1255.06 266.74L1256.46 265.08L1256.46 305.5L1249.45 305.5ZM1258.67 264.49L1259.89 263.22L1261.11 263.07L1261.11 305.5L1258.67 305.5ZM1263.32 262.63L1264.78 261.48L1266.25 261.3L1267.72 262.23L1269.18 260.96L1270.65 260.39L1270.65 305.5L1263.32 305.5ZM1275.02 259.17L1276.59 259.66L1278.16 258.43L1279.73 258.38L1279.73 305.5L1275.02 305.5ZM1282.48 256.04L1284.23 256.74L1285.98 256.68L1287.73 254.69L1287.73 305.5L1282.48 305.5ZM1289.24 256.3L1290.64 254.29L1292.04 254.67L1292.04 305.5L1289.24 305.5ZM1293.47 253.71L1295.14 254.08L1296.81 254.01L1298.48 252.47L1300.14 254.12L1300.14 305.5L1293.47 305.5ZM1304.57 258.25L1306.16 260.51L1307.76 262.03L1309.35 263.8L1309.35 305.5L1304.57 305.5ZM1310.43 265.89L1311.84 267.3L1313.26 268.25L1314.67 270.71L1316.08 271.24L1316.08 305.5L1310.43 305.5ZM1317.71 272.24L1319.16 274.13L1320.61 275.02L1322.06 276.55L1323.51 279.11L1324.95 279.5L1326.4 281.77L1326.4 305.5L1317.71 305.5ZM1338.03 284.48L1339.34 281.55L1340.66 282.4L1341.98 280.39L1341.98 305.5L1338.03 305.5ZM1349.95 275.17L1351.35 275.41L1352.74 272.98L1354.13 272.79L1355.52 272.92L1355.52 305.5L1349.95 305.5ZM1357.25 271.51L1358.58 270.24L1359.92 270.67L1361.26 269.64L1361.26 305.5L1357.25 305.5ZM1362.45 268.59L1364.02 266.76L1365.6 267.15L1367.17 266.07L1368.74 264.83L1368.74 305.5L1362.45 305.5ZM1375.13 262.96L1376.65 261.5L1378.17 261.65L1379.68 261.61L1381.2 260.62L1381.2 305.5L1375.13 305.5Z" fill="#FADE2A" fill-opacity="0.11"/><path d="M374 258.02L375.49 257.83L376.97 258.22L378.46 256.81L379.95 256.52L381.43 256.31M383.87 254.83L385.35 255.2L386.83 255.13L388.3 255.16L389.78 253.3L391.26 253.45L392.74 252.68M393.8 254.05L395.47 253.47L397.14 253.99L398.82 258.28L400.49 260.38M403.11 262.87L404.85 264.77L406.58 265.67M411.6 271.55L413.07 271.89L414.55 273.49L416.02 274.88L417.49 275.64L418.96 277.77L420.43 278.86M422.81 281.5L424.12 281.7L425.42 282.86M432.21 286.51L433.82 284.75L435.44 283.08M438.2 282.57L439.74 281.45L441.27 280.03L442.8 278.68L444.33 276.8L445.86 275.62L447.4 274.79M449.37 273.12L450.87 273.76L452.38 272.1L453.88 272.25L455.39 270.43L456.89 270.9L458.39 269.89M460.64 266.93L461.93 266.78L463.23 267.72L464.53 266.17M466.18 266.57L468.2 264.43M473.94 262.69L475.26 262.53L476.59 260.94L477.92 260.08M480.39 259.79L481.73 260.74L483.06 259.87L484.4 258.05L485.74 257.93M499.28 253.99L500.93 255.25M503.35 253.36L504.92 253.88M506 253.41L507.54 252.54L509.07 254.04M511.43 255.92L512.85 258.88L514.27 259.5L515.69 261.88M517.33 263.32L518.51 264.77L519.69 267.6M522.04 269.68L523.83 270.35M526.54 274.15L528.13 274.09L529.73 275.85L531.33 278.17L532.92 278.95M535.57 279.74L537.04 282.73L538.5 282.02L539.97 283.09L541.44 285.15M543 285.13L545.12 285.7M546.39 284.18L547.79 283.1L549.18 283.11M550.27 281.54L551.85 281.16L553.44 279.52L555.02 278.61M556.45 278.76L558.16 276.59L559.88 275.71L561.59 275.3M573.75 267.21L575.02 268.27L576.29 267.49M578.61 265.21L580.17 264.41L581.73 264.97L583.29 264.79L584.85 262.54L586.41 263.61M587.61 263.02L588.98 261.91L590.36 261.03L591.73 259.86L593.11 259.26L594.49 260.85L595.86 258.82M597.39 259.37L598.78 257.98L600.17 258.82L601.55 257.93L602.94 256.88L604.33 256.25L605.71 257.09M608.47 254.96L609.94 254.96L611.4 255.34L612.87 255.65L614.34 254.81L615.8 253.76M617.67 254.77L619 252.93L620.34 252.25M622.02 252.52L623.65 255.18L625.28 256.51L626.9 258.86L628.53 261.29M630.43 263.98L632.27 265.09L634.11 267.57M636.52 271.19L638.08 272.9L639.63 273.65L641.19 275.12L642.75 276.23L644.31 276.55M646.7 278.21L648.22 279.32L649.73 282.38L651.25 282.98L652.76 284.57L654.28 283.48M655.93 285.86L657.28 286.33L658.63 286.08L659.97 284.09L661.32 284.53M663.7 280.69L665.21 280.62L666.73 279.97L668.24 279.29L669.75 277.92L671.26 276.87L672.77 276.11M678.81 271.6L680.18 271.58L681.55 271.32L682.93 270.54L684.3 268.85L685.68 269M687.51 268.28L689.09 266.92L690.66 266.33L692.24 265.11L693.82 264.89L695.39 264.3M697.02 262.49L698.64 263.1L700.27 263.27L701.89 262.44L703.52 261.54L705.14 260.24M706.77 260.46L708.18 259.68L709.58 258.93L710.98 259.39L712.38 257.31L713.78 258.38M716.54 256.04L717.97 256.91L719.41 256.28L720.84 255.37L722.27 256.05M723.57 255.3L724.9 255.25L726.23 255.63L727.56 253.87L728.89 253.05M731.13 253.22L732.57 253.76L734.01 252.44M736.41 254.91L738.04 258.67L739.66 260.18L741.28 261.67M743.4 265.13L744.86 265.5L746.31 267.79L747.76 268.27L749.21 270.22L750.67 272.44M751.72 273.66L753.39 275.09L755.07 275.44L756.74 277.26L758.42 278M759.81 278.67L761.65 280.81M766.33 284.74L767.8 285.36L769.28 286.78M775.49 282.01L777.09 280.57L778.69 280.02L780.29 278.51L781.88 277.28M783.95 276.35L785.45 275.85M787.18 274.49L788.39 273.37L789.6 273.81M796.13 269.38L797.6 267.81L799.06 266.99L800.53 268.14L801.99 265.63M803.61 266.37L805.22 265.36L806.82 264.1L808.43 264.5L810.04 262.16L811.65 261.8M813.41 261.84L814.89 260.35L816.38 261.6L817.86 259.79M819.12 259.16L820.65 258.45L822.17 259.25L823.7 258.38L825.22 258.33L826.75 257.95L828.28 257.85M831.02 257.45L832.46 256.47L833.9 255.04L835.34 255.29L836.78 254.3L838.23 253.59L839.67 254.28M840.67 254.6L842.27 253.07L843.88 252.94L845.48 252.78L847.09 254.79M848.34 256.06L849.85 258.2L851.35 260.37L852.85 261.36M854.63 264.27L856.17 266.21L857.72 266.04L859.27 269.47L860.81 270.52L862.36 270.67L863.91 272.78M865.59 274.62L867.16 276.55L868.72 276.63L870.29 278.26L871.86 280.1M873.32 280.97L874.93 282.4L876.54 282.4L878.15 283.83M879.72 283.81L880.99 285.69L882.25 286.62L883.51 286.63M885.37 285.29L887.06 282.85L888.74 283.08L890.42 282.01M891.95 280.91L893.55 278.83M895.51 278.07L897.06 276.03L898.61 276.35L900.17 275.28L901.72 273.24L903.27 271.76M904.71 271.74L906.28 271.13L907.85 270.78L909.42 269.36L910.98 267.57L912.55 268.53L914.12 266.16M915.65 267.09L917.31 264.97L918.98 264.62L920.64 264.93L922.31 262.84M924.39 262.05L925.91 262.3L927.43 262.2L928.94 261.93L930.46 261.08L931.98 261.14M933.52 259.64L934.81 260.24L936.1 257.95L937.39 257.86M939.35 257.97L940.84 257.03L942.33 257.59L943.82 257L945.32 256.36L946.81 256.7M952.88 254.66L954.35 253.8L955.82 253.64L957.3 254.36L958.77 254.19L960.24 252.39L961.71 255.59M968.76 263.68L970.28 265.5L971.81 266.33L973.34 268.65L974.86 270.11M977.14 272.5L978.6 272.56L980.07 275.92L981.53 276.16L983 277.11L984.46 279.14L985.93 279.73M987.62 280.8L989.16 282.32L990.7 281.98M996.82 286.04L998.47 285.89L1000.13 284.51L1001.78 281.81M1003.3 281.14L1004.62 279.42L1005.94 279.17M1007.8 278.74L1009.18 278.01L1010.57 276.19L1011.95 274.97M1013.22 273.92L1015.27 273.64M1016.68 273.51L1018.05 271L1019.41 271.69L1020.77 269.3L1022.13 268.98L1023.49 268.37M1024.54 268.87L1026.12 267.31L1027.7 266.65L1029.28 266.52L1030.86 264.7L1032.45 265.4L1034.03 263.42M1042.66 261.05L1044.32 259.92L1045.99 259.26L1047.66 259.46L1049.32 258.75M1052.04 257.81L1053.32 257.54L1054.6 257.44L1055.88 256.28M1058.53 255.69L1060.13 256.23L1061.74 255.86L1063.34 255.25M1067.4 254.53L1069.48 254.63M1070.58 253.04L1072 253.87L1073.42 253.75L1074.84 255.33L1076.27 255.95L1077.69 257.79L1079.11 260.9M1080.35 260.85L1081.93 264.4L1083.5 265.93L1085.08 265.97L1086.65 267.83M1088.53 270.77L1090.48 271.59M1092.73 273.26L1094.12 276.06L1095.51 276.31L1096.89 278.23L1098.28 277.84M1100.92 280.39L1102.72 282.27L1104.53 282M1106.52 283.67L1107.93 285.58L1109.34 286.91L1110.75 287.08L1112.15 284.06M1113.4 283.94L1114.87 283.36L1116.35 281.69L1117.83 281.02L1119.31 278.89L1120.79 277.61M1122.11 276.8L1124.29 275.24M1126.5 275.01L1128.06 274L1129.62 273.21L1131.19 271.4L1132.75 270.63M1134.18 269.92L1135.54 270.62L1136.9 270.26L1138.26 269.45M1149.47 262.68L1150.86 264.1L1152.25 262.5L1153.64 262.66L1155.03 261.2L1156.42 261.03M1157.83 260.67L1159.19 260.03L1160.55 259.97L1161.92 258.26L1163.28 259.36L1164.65 259.27M1167.12 257.11L1168.57 257.31L1170.01 257.56L1171.46 256.45M1172.88 255.63L1174.31 255.21L1175.74 255.63L1177.17 254.21M1178.86 255.76L1180.53 255.19L1182.21 254.63L1183.88 254.63L1185.55 253.79M1188 252.83L1189.41 254.97L1190.82 256.75L1192.23 259.72L1193.64 261.17M1195.7 262.57L1197.26 265.87L1198.81 267.3L1200.37 269.1M1210.07 277.67L1211.59 280.02L1213.11 281.21L1214.62 281.98L1216.14 283.28L1217.66 284.36M1218.66 284.27L1220.27 286.06L1221.88 285.4L1223.5 284.7L1225.11 283.71M1226.88 281.36L1228.25 281.11L1229.62 280.75M1230.91 279.82L1232.33 277.99L1233.76 278.61L1235.18 277.08L1236.6 275.47L1238.03 275.31L1239.45 274.26M1240.72 273.45L1242.12 272.34L1243.52 272.92M1245.03 271.32L1246.79 270.54M1249.45 269.36L1250.85 269.17L1252.26 266.41L1253.66 267.09L1255.06 266.74L1256.46 265.08M1258.67 264.49L1259.89 263.22L1261.11 263.07M1263.32 262.63L1264.78 261.48L1266.25 261.3L1267.72 262.23L1269.18 260.96L1270.65 260.39M1275.02 259.17L1276.59 259.66L1278.16 258.43L1279.73 258.38M1282.48 256.04L1284.23 256.74L1285.98 256.68L1287.73 254.69M1289.24 256.3L1290.64 254.29L1292.04 254.67M1293.47 253.71L1295.14 254.08L1296.81 254.01L1298.48 252.47L1300.14 254.12M1304.57 258.25L1306.16 260.51L1307.76 262.03L1309.35 263.8M1310.43 265.89L1311.84 267.3L1313.26 268.25L1314.67 270.71L1316.08 271.24M1317.71 272.24L1319.16 274.13L1320.61 275.02L1322.06 276.55L1323.51 279.11L1324.95 279.5L1326.4 281.77M1338.03 284.48L1339.34 281.55L1340.66 282.4L1341.98 280.39M1349.95 275.17L1351.35 275.41L1352.74 272.98L1354.13 272.79L1355.52 272.92M1357.25 271.51L1358.58 270.24L1359.92 270.67L1361.26 269.64M1362.45 268.59L1364.02 266.76L1365.6 267.15L1367.17 266.07L1368.74 264.83M1375.13 262.96L1376.65 261.5L1378.17 261.65L1379.68 261.61L1381.2 260.62" fill="none" stroke="#FADE2A" stroke-width="1.1" stroke-linejoin="round"/><g fill="#FADE2A"><circle cx="408.56" cy="267.43" r="1.8"/><circle cx="427.53" cy="283.93" r="1.8"/><circle cx="469.74" cy="263.09" r="1.8"/><circle cx="494.91" cy="255.13" r="1.8"/><circle cx="570.01" cy="269.12" r="1.8"/><circle cx="674.94" cy="275.06" r="1.8"/><circle cx="763.49" cy="282.85" r="1.8"/><circle cx="792.1" cy="272.7" r="1.8"/><circle cx="964.31" cy="259.28" r="1.8"/><circle cx="992.23" cy="284.01" r="1.8"/><circle cx="1064.63" cy="255.66" r="1.8"/><circle cx="1146.6" cy="263.9" r="1.8"/><circle cx="1205.35" cy="274.29" r="1.8"/><circle cx="1271.94" cy="260.99" r="1.8"/><circle cx="1301.92" cy="254.31" r="1.8"/><circle cx="1328.29" cy="282.88" r="1.8"/><circle cx="1331.4" cy="283.58" r="1.8"/><circle cx="1334.89" cy="287.09" r="1.8"/><circle cx="1371.28" cy="263.43" r="1.8"/></g><path d="M1187.5 76V306" stroke="rgb(170,0,0)" stroke-opacity="0.8" stroke-width="1.5"/><circle cx="1187.5" cy="209" r="2.5" fill="none" stroke="#F2495C" stroke-width="1" opacity="0.8"/><circle cx="1187.5" cy="252" r="2.5" fill="none" stroke="#FADE2A" stroke-width="1" opacity="0.8"/><g font-size="12" fill="#c7d0d9" stroke="#c7d0d9" stroke-width="0.2"><text x="369.8" y="80" text-anchor="end" textLength="28.74" lengthAdjust="spacingAndGlyphs">15 °C</text><text x="369.8" y="156.3" text-anchor="end" textLength="28.74" lengthAdjust="spacingAndGlyphs">10 °C</text><text x="369.8" y="232.7" text-anchor="end" textLength="22" lengthAdjust="spacingAndGlyphs">5 °C</text><text x="369.8" y="309" text-anchor="end" textLength="22" lengthAdjust="spacingAndGlyphs">0 °C</text><text x="1393" y="80" textLength="29" lengthAdjust="spacingAndGlyphs">100%</text><text x="1393" y="125.8" textLength="22.26" lengthAdjust="spacingAndGlyphs">80%</text><text x="1393" y="264.4" textLength="22.26" lengthAdjust="spacingAndGlyphs">20%</text><text x="1393" y="309" textLength="15.53" lengthAdjust="spacingAndGlyphs">0%</text><text x="405.4" y="323" text-anchor="middle">20:00</text><text x="489.4" y="323" text-anchor="middle">21:00</text><text x="573.4" y="323" text-anchor="middle">22:00</text><text x="657.4" y="323" text-anchor="middle">23:00</text><text x="741.4" y="323" text-anchor="middle">00:00</text><text x="825.4" y="323" text-anchor="middle">01:00</text><text x="909.4" y="323" text-anchor="middle">02:00</text><text x="993.4" y="323" text-anchor="middle">03:00</text><text x="1077.4" y="323" text-anchor="middle">04:00</text><text x="1161.4" y="323" text-anchor="middle">05:00</text><text x="1245.4" y="323" text-anchor="middle">06:00</text><text x="1329.4" y="323" text-anchor="middle">07:00</text><text transform="translate(331 198.2) rotate(-90)" text-anchor="middle">temps</text><text transform="translate(1429 198.2) rotate(90)" text-anchor="middle">hums</text></g><path d="M1447 356V360H1443" fill="none" stroke="#6a6b6e" stroke-width="2" stroke-linecap="square"/></svg></div>
<div class="panel " style="left:311px;top:372px;width:1140px;height:334px"><svg class="pg" width="1140" height="334" viewBox="311 372 1140 334"><path d="M384 390.5H1382" stroke="#c8c8c8" stroke-opacity="0.22" stroke-width="1"/><path d="M384 433.5H1382" stroke="#c8c8c8" stroke-opacity="0.22" stroke-width="1"/><path d="M384 476.5H1382" stroke="#c8c8c8" stroke-opacity="0.22" stroke-width="1"/><path d="M384 519.5H1382" stroke="#c8c8c8" stroke-opacity="0.22" stroke-width="1"/><path d="M384 562.5H1382" stroke="#c8c8c8" stroke-opacity="0.22" stroke-width="1"/><path d="M384 605.5H1382" stroke="#c8c8c8" stroke-opacity="0.22" stroke-width="1"/><path d="M384 648.5H1382" stroke="#c8c8c8" stroke-opacity="0.22" stroke-width="1"/><path d="M414.5 390V649" stroke="#c8c8c8" stroke-opacity="0.22" stroke-width="1"/><path d="M497.5 390V649" stroke="#c8c8c8" stroke-opacity="0.22" stroke-width="1"/><path d="M580.5 390V649" stroke="#c8c8c8" stroke-opacity="0.22" stroke-width="1"/><path d="M664.5 390V649" stroke="#c8c8c8" stroke-opacity="0.22" stroke-width="1"/><path d="M747.5 390V649" stroke="#c8c8c8" stroke-opacity="0.22" stroke-width="1"/><path d="M830.5 390V649" stroke="#c8c8c8" stroke-opacity="0.22" stroke-width="1"/><path d="M913.5 390V649" stroke="#c8c8c8" stroke-opacity="0.22" stroke-width="1"/><path d="M996.5 390V649" stroke="#c8c8c8" stroke-opacity="0.22" stroke-width="1"/><path d="M1080.5 390V649" stroke="#c8c8c8" stroke-opacity="0.22" stroke-width="1"/><path d="M1163.5 390V649" stroke="#c8c8c8" stroke-opacity="0.22" stroke-width="1"/><path d="M1246.5 390V649" stroke="#c8c8c8" stroke-opacity="0.22" stroke-width="1"/><path d="M1329.5 390V649" stroke="#c8c8c8" stroke-opacity="0.22" stroke-width="1"/><path d="M1383 390.5H1388" stroke="#c8c8c8" stroke-opacity="0.22" stroke-width="1"/><path d="M1383 441.5H1388" stroke="#c8c8c8" stroke-opacity="0.22" stroke-width="1"/><path d="M1383 493.5H1388" stroke="#c8c8c8" stroke-opacity="0.22" stroke-width="1"/><path d="M1383 545.5H1388" stroke="#c8c8c8" stroke-opacity="0.22" stroke-width="1"/><path d="M1383 596.5H1388" stroke="#c8c8c8" stroke-opacity="0.22" stroke-width="1"/><path d="M1383 648.5H1388" stroke="#c8c8c8" stroke-opacity="0.22" stroke-width="1"/><path d="M388.22 489.15L389.24 488.73L390.26 488.31L391.28 487.9L392.3 487.5L393.32 487.11L393.32 648.5L388.22 648.5ZM394.66 486.59L395.73 486.19L396.8 485.79L397.87 485.4L398.94 485.01L400.01 484.63L400.01 648.5L394.66 648.5ZM405.24 485.21L406.25 498.57L407.26 511.93L407.26 648.5L405.24 648.5ZM409.53 529.04L410.44 532.9L411.35 536.34L411.35 648.5L409.53 648.5ZM413.95 544.19L414.97 546.62L415.99 548.75L417.01 550.61L418.03 552.24L419.04 553.67L420.06 554.92L420.06 648.5L413.95 648.5ZM421.12 556.06L422.3 557.16L423.49 558.1L423.49 648.5L421.12 648.5ZM435.37 562.56L436.31 562.7L437.25 562.82L438.19 562.93L439.13 563.03L440.07 563.11L441.01 563.19L441.01 648.5L435.37 648.5ZM442.56 558.52L443.45 555.46L444.34 552.53L444.34 648.5L442.56 648.5ZM446.73 545.29L447.75 542.44L448.77 539.74L449.79 537.16L449.79 648.5L446.73 648.5ZM452.34 531.28L453.37 529.09L454.4 527.01L455.44 525.03L456.47 523.15L457.5 521.35L458.53 519.63L459.56 518L459.56 648.5L452.34 648.5ZM465.18 510.29L466.19 509.1L467.19 507.96L468.19 506.87L468.19 648.5L465.18 648.5ZM470.67 504.34L471.73 503.34L472.79 502.37L473.85 501.44L474.91 500.54L474.91 648.5L470.67 648.5ZM476.63 499.16L477.73 498.32L478.83 497.51L479.93 496.73L481.03 495.98L481.03 648.5L476.63 648.5ZM487.94 491.78L488.99 491.21L490.03 490.66L491.08 490.12L492.12 489.59L493.16 489.08L493.16 648.5L487.94 648.5ZM494.95 488.23L496.01 487.74L497.06 487.26L498.12 486.8L498.12 648.5L494.95 648.5ZM500.09 485.95L501.04 485.55L501.99 485.15L502.94 484.77L502.94 648.5L500.09 648.5ZM504.22 484.26L505.24 483.85L506.27 483.46L507.29 483.06L508.32 482.68L508.32 648.5L504.22 648.5ZM512.94 480.99L513.98 480.62L515.03 480.25L516.08 479.89L517.12 483.34L518.17 498.34L519.22 513.34L520.26 523.87L520.26 648.5L512.94 648.5ZM521.86 531.36L522.89 535.42L523.92 538.97L524.95 542.08L525.98 544.8L527.01 547.17L528.04 549.25L529.07 551.07L530.1 552.66L530.1 648.5L521.86 648.5ZM532.64 555.78L533.61 556.73L534.57 557.56L535.54 558.3L536.51 558.94L537.48 559.51L538.44 560.02L539.41 560.46L540.38 560.86L541.35 561.2L541.35 648.5L532.64 648.5ZM543.29 561.78L544.37 562.04L545.45 562.27L546.53 562.47L547.61 562.64L547.61 648.5L543.29 648.5ZM551.68 563.11L552.72 563.19L553.77 560.25L554.81 556.9L555.85 553.73L556.9 550.72L557.94 547.86L558.98 545.14L558.98 648.5L551.68 648.5ZM563.9 534.06L564.83 532.24L565.76 530.5L566.69 528.84L567.62 527.25L568.55 525.72L568.55 648.5L563.9 648.5ZM574.17 517.72L575.16 516.5L576.15 515.34L577.13 514.23L578.12 513.16L579.1 512.13L580.09 511.14L581.08 510.18L582.06 509.27L583.05 508.39L583.05 648.5L574.17 648.5ZM585.24 506.53L586.21 505.76L587.17 505.02L588.14 504.3L589.1 503.6L590.07 502.93L591.04 502.27L592 501.64L592.97 501.02L593.93 500.42L593.93 648.5L585.24 648.5ZM598.8 497.64L599.87 497.08L600.94 496.53L602 496L603.07 495.48L604.14 494.97L605.2 494.47L606.27 493.99L606.27 648.5L598.8 648.5ZM608.68 492.92L609.66 492.51L610.63 492.1L611.61 491.69L612.58 491.3L613.56 490.91L614.54 490.52L614.54 648.5L608.68 648.5ZM616.9 489.61L617.79 489.28L618.68 488.95L619.57 488.62L620.47 488.29L620.47 648.5L616.9 648.5ZM628.44 485.52L629.28 487.91L630.11 498.3L630.11 648.5L628.44 648.5ZM632.06 521.75L633.04 526.78L634.02 531.21L635 535.11L635.98 538.54L636.97 541.56L637.95 544.22L637.95 648.5L632.06 648.5ZM639.36 547.5L640.39 549.56L641.43 551.35L642.47 552.92L643.5 554.29L644.54 555.49L645.58 556.54L646.61 557.46L647.65 558.26L647.65 648.5L639.36 648.5ZM660.52 562.77L661.75 562.92L662.97 563.06L662.97 648.5L660.52 648.5ZM664.83 562.65L665.88 558.96L666.93 555.47L667.98 552.15L667.98 648.5L664.83 648.5ZM669.25 548.38L670.22 545.63L671.2 543.01L672.17 540.51L673.15 538.14L674.12 535.87L675.1 533.7L676.07 531.64L676.07 648.5L669.25 648.5ZM683.8 518.22L684.84 516.75L685.88 515.34L686.93 513.99L687.97 512.7L689.02 511.46L690.06 510.28L691.1 509.14L691.1 648.5L683.8 648.5ZM706.91 496.42L707.87 495.84L708.83 495.28L709.79 494.73L710.76 494.19L711.72 493.67L712.68 493.16L713.64 492.66L713.64 648.5L706.91 648.5ZM719.69 489.76L720.73 489.3L721.76 488.85L722.79 488.41L723.82 487.97L724.85 487.55L725.89 487.13L726.92 486.71L727.95 486.31L727.95 648.5L719.69 648.5ZM729.42 485.74L730.38 485.37L731.34 485.01L732.29 484.66L733.25 484.3L734.21 483.96L735.16 483.61L736.12 483.27L737.08 482.93L738.03 482.6L738.03 648.5L729.42 648.5ZM739.19 482.2L740.19 483.62L741.19 497.2L742.2 510.78L743.2 522.46L744.2 527.5L745.2 531.92L746.2 535.81L746.2 648.5L739.19 648.5ZM748.75 543.69L749.84 546.34L750.93 548.63L752.01 550.63L753.1 552.36L754.19 553.87L754.19 648.5L748.75 648.5ZM762.35 560.34L763.39 560.78L764.43 561.15L765.47 561.49L766.51 561.78L766.51 648.5L762.35 648.5ZM775.25 563.13L776.22 563.06L777.19 559.53L778.16 556.18L779.14 552.98L780.11 549.94L780.11 648.5L775.25 648.5ZM787.68 530.66L788.76 528.45L789.83 526.35L790.91 524.35L791.98 522.46L793.06 520.65L793.06 648.5L787.68 648.5ZM794.68 518.09L795.62 516.69L796.55 515.36L796.55 648.5L794.68 648.5ZM798.24 513.07L799.2 511.85L800.15 510.68L801.11 509.56L802.06 508.48L803.01 507.44L803.97 506.44L804.92 505.48L805.87 504.55L805.87 648.5L798.24 648.5ZM808.03 502.58L809.13 501.63L810.23 500.72L811.33 499.84L812.42 499L812.42 648.5L808.03 648.5ZM814.2 497.7L815.27 496.95L816.34 496.23L816.34 648.5L814.2 648.5ZM818.11 495.09L819.13 494.45L820.15 493.84L821.18 493.24L822.2 492.66L823.22 492.09L824.24 491.54L825.27 491L826.29 490.47L826.29 648.5L818.11 648.5ZM828.54 489.36L829.47 488.92L830.4 488.48L831.33 488.05L832.26 487.63L833.19 487.22L834.12 486.81L835.05 486.41L835.05 648.5L828.54 648.5ZM837.42 485.42L838.53 484.97L839.65 484.53L840.76 484.09L840.76 648.5L837.42 648.5ZM843.23 483.14L844.19 482.78L845.15 482.42L846.11 482.07L847.07 481.72L848.03 481.37L848.99 481.03L849.95 480.69L850.91 485.3L850.91 648.5L843.23 648.5ZM856.74 535.87L857.84 539.59L858.95 542.82L860.06 545.61L861.17 548.03L861.17 648.5L856.74 648.5ZM865.66 554.93L866.67 556L867.68 556.94L868.69 557.77L869.7 558.49L870.71 559.12L871.72 559.68L872.73 560.17L872.73 648.5L865.66 648.5ZM881.29 562.5L882.31 562.65L883.32 562.77L884.33 562.88L884.33 648.5L881.29 648.5ZM885.87 563.02L887.02 563.11L888.18 563.18L889.33 560.7L889.33 648.5L885.87 648.5ZM891.85 552.85L892.83 550.06L893.81 547.4L894.79 544.87L895.77 542.46L896.75 540.16L897.73 537.97L898.71 535.87L899.69 533.88L899.69 648.5L891.85 648.5ZM900.94 531.47L901.93 529.64L902.93 527.9L903.93 526.23L904.93 524.64L905.92 523.12L906.92 521.66L906.92 648.5L900.94 648.5ZM908.36 519.66L909.36 518.35L910.36 517.1L911.37 515.89L912.37 514.74L913.37 513.63L913.37 648.5L908.36 648.5ZM915.07 511.85L916 510.92L916.94 510.02L917.87 509.16L917.87 648.5L915.07 648.5ZM919.49 507.73L920.46 506.92L921.42 506.13L922.39 505.38L923.36 504.64L924.32 503.93L925.29 503.25L926.26 502.58L927.23 501.93L928.19 501.31L928.19 648.5L919.49 648.5ZM929.25 500.64L930.22 500.05L931.19 499.48L932.16 498.92L933.13 498.38L934.1 497.85L935.06 497.33L936.03 496.82L936.03 648.5L929.25 648.5ZM941.08 494.37L942.18 493.87L943.28 493.38L944.39 492.9L944.39 648.5L941.08 648.5ZM948.67 491.12L949.7 490.71L950.72 490.31L951.75 489.91L952.77 489.52L953.8 489.14L954.83 488.76L955.85 488.38L956.88 488.01L956.88 648.5L948.67 648.5ZM958.47 487.44L959.43 487.1L960.39 486.77L961.35 486.44L962.3 486.11L963.26 485.78L964.22 485.46L965.18 491.68L966.14 503.57L966.14 648.5L958.47 648.5ZM971.74 539L972.68 541.85L973.62 544.36L974.56 546.59L975.49 548.57L976.43 550.31L977.37 551.86L977.37 648.5L971.74 648.5ZM978.73 553.79L979.79 555.07L980.84 556.18L981.9 557.15L982.95 558L984.01 558.74L985.06 559.38L986.12 559.94L987.17 560.43L987.17 648.5L978.73 648.5ZM999.66 563.11L1000.69 563.19L1001.72 560.29L1002.75 556.88L1003.78 553.64L1004.8 550.57L1005.83 547.64L1006.86 544.87L1006.86 648.5L999.66 648.5ZM1014.42 528.21L1015.45 526.38L1016.47 524.63L1017.5 522.96L1018.52 521.37L1019.55 519.85L1020.57 518.4L1020.57 648.5L1014.42 648.5ZM1022.33 516.06L1023.21 514.95L1024.09 513.88L1024.97 512.85L1025.85 511.86L1025.85 648.5L1022.33 648.5ZM1027.42 510.18L1028.44 509.14L1029.46 508.14L1030.48 507.18L1031.5 506.26L1032.53 505.37L1033.55 504.51L1034.57 503.69L1035.59 502.89L1035.59 648.5L1027.42 648.5ZM1041.75 498.62L1042.73 498.01L1043.7 497.42L1044.68 496.85L1044.68 648.5L1041.75 648.5ZM1049.26 494.36L1050.2 493.88L1051.14 493.41L1052.09 492.95L1053.03 492.5L1053.97 492.06L1054.92 491.63L1055.86 491.2L1055.86 648.5L1049.26 648.5ZM1062.73 488.32L1063.65 487.96L1064.56 487.6L1065.47 487.25L1066.38 486.91L1067.3 486.56L1067.3 648.5L1062.73 648.5ZM1069.4 485.79L1070.45 485.41L1071.49 485.04L1071.49 648.5L1069.4 648.5ZM1077.19 495.48L1078.23 509L1079.26 521.73L1080.3 527.01L1081.33 531.63L1082.37 535.66L1083.41 539.19L1083.41 648.5L1077.19 648.5ZM1084.68 542.95L1085.59 545.25L1086.49 547.3L1087.4 549.12L1087.4 648.5L1084.68 648.5ZM1089.76 552.97L1090.7 554.21L1091.65 555.31L1092.59 556.28L1093.53 557.13L1094.47 557.89L1095.41 558.56L1096.36 559.16L1096.36 648.5L1089.76 648.5ZM1097.7 559.89L1098.8 560.4L1099.9 560.84L1101 561.22L1102.1 561.56L1103.2 561.84L1103.2 648.5L1097.7 648.5ZM1105.66 562.36L1106.61 562.51L1107.56 562.65L1108.51 562.78L1109.46 562.89L1110.42 562.98L1111.37 563.07L1112.32 563.14L1113.27 562.86L1114.22 559.39L1114.22 648.5L1105.66 648.5ZM1120.1 541.29L1121.11 538.68L1122.12 536.2L1123.13 533.83L1124.14 531.58L1125.14 529.44L1126.15 527.39L1126.15 648.5L1120.1 648.5ZM1133.19 515.52L1134.2 514.09L1135.22 512.73L1136.23 511.43L1137.25 510.18L1138.26 508.99L1139.27 507.84L1140.29 506.74L1141.3 505.68L1141.3 648.5L1133.19 648.5ZM1142.63 504.36L1143.68 503.36L1144.72 502.41L1145.77 501.49L1146.81 500.61L1147.86 499.76L1148.9 498.93L1149.95 498.14L1149.95 648.5L1142.63 648.5ZM1152.13 496.57L1153.19 495.85L1154.26 495.15L1154.26 648.5L1152.13 648.5ZM1155.9 494.1L1156.86 493.52L1157.81 492.96L1158.76 492.41L1159.71 491.87L1160.66 491.35L1161.61 490.84L1162.56 490.34L1163.52 489.85L1163.52 648.5L1155.9 648.5ZM1168.65 487.38L1169.5 487L1170.35 486.62L1170.35 648.5L1168.65 648.5ZM1177.23 483.76L1178.26 483.35L1179.29 482.96L1180.31 482.56L1181.34 482.18L1182.37 481.79L1183.39 481.42L1184.42 481.04L1185.45 480.67L1185.45 648.5L1177.23 648.5ZM1187.27 480.02L1188.21 491.89L1189.14 505.21L1190.08 518.52L1191.02 525.12L1191.95 529.53L1191.95 648.5L1187.27 648.5ZM1193.98 537.43L1195.04 540.82L1196.1 543.77L1197.17 546.34L1198.23 548.58L1199.29 550.53L1200.36 552.22L1200.36 648.5L1193.98 648.5ZM1201.76 554.13L1202.8 555.34L1203.83 556.38L1204.87 557.3L1205.9 558.11L1206.93 558.81L1206.93 648.5L1201.76 648.5ZM1208.36 559.63L1209.24 560.07L1210.13 560.46L1210.13 648.5L1208.36 648.5ZM1212.44 561.3L1213.45 561.59L1214.45 561.85L1215.45 562.07L1216.46 562.27L1217.46 562.44L1218.46 562.59L1219.47 562.73L1219.47 648.5L1212.44 648.5ZM1221.64 562.96L1222.75 563.06L1223.86 563.14L1224.98 562.47L1226.09 558.45L1226.09 648.5L1221.64 648.5ZM1227.09 555L1228.06 551.84L1229.04 548.83L1230.01 545.96L1230.98 543.23L1231.95 540.62L1232.92 538.14L1232.92 648.5L1227.09 648.5ZM1235.51 532.05L1236.51 529.89L1237.52 527.84L1238.52 525.88L1239.52 524.02L1240.52 522.23L1241.52 520.53L1242.52 518.9L1242.52 648.5L1235.51 648.5ZM1248.25 510.87L1249.3 509.6L1250.35 508.38L1251.39 507.22L1252.44 506.1L1253.49 505.03L1253.49 648.5L1248.25 648.5ZM1255.23 503.35L1256.23 502.43L1257.23 501.55L1258.23 500.7L1259.23 499.87L1260.22 499.08L1261.22 498.31L1261.22 648.5L1255.23 648.5ZM1263.33 496.78L1264.41 496.03L1265.49 495.31L1266.56 494.61L1267.64 493.93L1267.64 648.5L1263.33 648.5ZM1269.04 493.08L1270.1 492.47L1271.16 491.86L1272.22 491.28L1273.27 490.71L1274.33 490.15L1275.39 489.61L1276.45 489.08L1277.5 488.56L1277.5 648.5L1269.04 648.5ZM1278.82 487.93L1279.86 487.45L1280.9 486.98L1280.9 648.5L1278.82 648.5ZM1286.97 484.38L1287.92 483.99L1288.86 483.62L1289.81 483.24L1290.75 482.88L1291.7 482.51L1292.64 482.15L1293.59 481.8L1293.59 648.5L1286.97 648.5ZM1295.06 481.25L1296.11 480.87L1297.16 480.49L1298.2 480.11L1299.25 491.06L1300.29 505.94L1300.29 648.5L1295.06 648.5ZM1302.44 526.69L1303.44 531.21L1304.44 535.18L1305.45 538.66L1306.45 541.72L1306.45 648.5L1302.44 648.5ZM1308.49 546.83L1309.34 548.59L1310.19 550.18L1311.05 551.59L1311.05 648.5L1308.49 648.5ZM1312.14 553.19L1313.35 554.72L1314.56 556.03L1314.56 648.5L1312.14 648.5ZM1321.28 560.49L1322.25 560.86L1323.21 561.2L1324.18 561.49L1325.15 561.75L1326.11 561.98L1326.11 648.5L1321.28 648.5ZM1327.91 562.33L1328.96 562.5L1330 562.65L1331.05 562.79L1332.09 562.9L1333.14 563L1334.18 563.09L1334.18 648.5L1327.91 648.5ZM1336.2 562.01L1337.22 558.33L1338.25 554.84L1339.27 551.53L1340.29 548.39L1341.32 545.4L1342.34 542.56L1343.36 539.86L1343.36 648.5L1336.2 648.5ZM1345.38 534.92L1346.44 532.51L1347.5 530.23L1348.56 528.06L1348.56 648.5L1345.38 648.5ZM1356.39 514.92L1357.45 513.48L1358.5 512.1L1359.55 510.79L1359.55 648.5L1356.39 648.5ZM1369.71 500.63L1370.71 499.83L1371.7 499.06L1372.69 498.32L1373.68 497.6L1373.68 648.5L1369.71 648.5Z" fill="#EAB839" fill-opacity="0.12"/><path d="M388.22 489.15L389.24 488.73L390.26 488.31L391.28 487.9L392.3 487.5L393.32 487.11M394.66 486.59L395.73 486.19L396.8 485.79L397.87 485.4L398.94 485.01L400.01 484.63M405.24 485.21L406.25 498.57L407.26 511.93M409.53 529.04L410.44 532.9L411.35 536.34M413.95 544.19L414.97 546.62L415.99 548.75L417.01 550.61L418.03 552.24L419.04 553.67L420.06 554.92M421.12 556.06L422.3 557.16L423.49 558.1M435.37 562.56L436.31 562.7L437.25 562.82L438.19 562.93L439.13 563.03L440.07 563.11L441.01 563.19M442.56 558.52L443.45 555.46L444.34 552.53M446.73 545.29L447.75 542.44L448.77 539.74L449.79 537.16M452.34 531.28L453.37 529.09L454.4 527.01L455.44 525.03L456.47 523.15L457.5 521.35L458.53 519.63L459.56 518M465.18 510.29L466.19 509.1L467.19 507.96L468.19 506.87M470.67 504.34L471.73 503.34L472.79 502.37L473.85 501.44L474.91 500.54M476.63 499.16L477.73 498.32L478.83 497.51L479.93 496.73L481.03 495.98M487.94 491.78L488.99 491.21L490.03 490.66L491.08 490.12L492.12 489.59L493.16 489.08M494.95 488.23L496.01 487.74L497.06 487.26L498.12 486.8M500.09 485.95L501.04 485.55L501.99 485.15L502.94 484.77M504.22 484.26L505.24 483.85L506.27 483.46L507.29 483.06L508.32 482.68M512.94 480.99L513.98 480.62L515.03 480.25L516.08 479.89L517.12 483.34L518.17 498.34L519.22 513.34L520.26 523.87M521.86 531.36L522.89 535.42L523.92 538.97L524.95 542.08L525.98 544.8L527.01 547.17L528.04 549.25L529.07 551.07L530.1 552.66M532.64 555.78L533.61 556.73L534.57 557.56L535.54 558.3L536.51 558.94L537.48 559.51L538.44 560.02L539.41 560.46L540.38 560.86L541.35 561.2M543.29 561.78L544.37 562.04L545.45 562.27L546.53 562.47L547.61 562.64M551.68 563.11L552.72 563.19L553.77 560.25L554.81 556.9L555.85 553.73L556.9 550.72L557.94 547.86L558.98 545.14M563.9 534.06L564.83 532.24L565.76 530.5L566.69 528.84L567.62 527.25L568.55 525.72M574.17 517.72L575.16 516.5L576.15 515.34L577.13 514.23L578.12 513.16L579.1 512.13L580.09 511.14L581.08 510.18L582.06 509.27L583.05 508.39M585.24 506.53L586.21 505.76L587.17 505.02L588.14 504.3L589.1 503.6L590.07 502.93L591.04 502.27L592 501.64L592.97 501.02L593.93 500.42M598.8 497.64L599.87 497.08L600.94 496.53L602 496L603.07 495.48L604.14 494.97L605.2 494.47L606.27 493.99M608.68 492.92L609.66 492.51L610.63 492.1L611.61 491.69L612.58 491.3L613.56 490.91L614.54 490.52M616.9 489.61L617.79 489.28L618.68 488.95L619.57 488.62L620.47 488.29M628.44 485.52L629.28 487.91L630.11 498.3M632.06 521.75L633.04 526.78L634.02 531.21L635 535.11L635.98 538.54L636.97 541.56L637.95 544.22M639.36 547.5L640.39 549.56L641.43 551.35L642.47 552.92L643.5 554.29L644.54 555.49L645.58 556.54L646.61 557.46L647.65 558.26M660.52 562.77L661.75 562.92L662.97 563.06M664.83 562.65L665.88 558.96L666.93 555.47L667.98 552.15M669.25 548.38L670.22 545.63L671.2 543.01L672.17 540.51L673.15 538.14L674.12 535.87L675.1 533.7L676.07 531.64M683.8 518.22L684.84 516.75L685.88 515.34L686.93 513.99L687.97 512.7L689.02 511.46L690.06 510.28L691.1 509.14M706.91 496.42L707.87 495.84L708.83 495.28L709.79 494.73L710.76 494.19L711.72 493.67L712.68 493.16L713.64 492.66M719.69 489.76L720.73 489.3L721.76 488.85L722.79 488.41L723.82 487.97L724.85 487.55L725.89 487.13L726.92 486.71L727.95 486.31M729.42 485.74L730.38 485.37L731.34 485.01L732.29 484.66L733.25 484.3L734.21 483.96L735.16 483.61L736.12 483.27L737.08 482.93L738.03 482.6M739.19 482.2L740.19 483.62L741.19 497.2L742.2 510.78L743.2 522.46L744.2 527.5L745.2 531.92L746.2 535.81M748.75 543.69L749.84 546.34L750.93 548.63L752.01 550.63L753.1 552.36L754.19 553.87M762.35 560.34L763.39 560.78L764.43 561.15L765.47 561.49L766.51 561.78M775.25 563.13L776.22 563.06L777.19 559.53L778.16 556.18L779.14 552.98L780.11 549.94M787.68 530.66L788.76 528.45L789.83 526.35L790.91 524.35L791.98 522.46L793.06 520.65M794.68 518.09L795.62 516.69L796.55 515.36M798.24 513.07L799.2 511.85L800.15 510.68L801.11 509.56L802.06 508.48L803.01 507.44L803.97 506.44L804.92 505.48L805.87 504.55M808.03 502.58L809.13 501.63L810.23 500.72L811.33 499.84L812.42 499M814.2 497.7L815.27 496.95L816.34 496.23M818.11 495.09L819.13 494.45L820.15 493.84L821.18 493.24L822.2 492.66L823.22 492.09L824.24 491.54L825.27 491L826.29 490.47M828.54 489.36L829.47 488.92L830.4 488.48L831.33 488.05L832.26 487.63L833.19 487.22L834.12 486.81L835.05 486.41M837.42 485.42L838.53 484.97L839.65 484.53L840.76 484.09M843.23 483.14L844.19 482.78L845.15 482.42L846.11 482.07L847.07 481.72L848.03 481.37L848.99 481.03L849.95 480.69L850.91 485.3M856.74 535.87L857.84 539.59L858.95 542.82L860.06 545.61L861.17 548.03M865.66 554.93L866.67 556L867.68 556.94L868.69 557.77L869.7 558.49L870.71 559.12L871.72 559.68L872.73 560.17M881.29 562.5L882.31 562.65L883.32 562.77L884.33 562.88M885.87 563.02L887.02 563.11L888.18 563.18L889.33 560.7M891.85 552.85L892.83 550.06L893.81 547.4L894.79 544.87L895.77 542.46L896.75 540.16L897.73 537.97L898.71 535.87L899.69 533.88M900.94 531.47L901.93 529.64L902.93 527.9L903.93 526.23L904.93 524.64L905.92 523.12L906.92 521.66M908.36 519.66L909.36 518.35L910.36 517.1L911.37 515.89L912.37 514.74L913.37 513.63M915.07 511.85L916 510.92L916.94 510.02L917.87 509.16M919.49 507.73L920.46 506.92L921.42 506.13L922.39 505.38L923.36 504.64L924.32 503.93L925.29 503.25L926.26 502.58L927.23 501.93L928.19 501.31M929.25 500.64L930.22 500.05L931.19 499.48L932.16 498.92L933.13 498.38L934.1 497.85L935.06 497.33L936.03 496.82M941.08 494.37L942.18 493.87L943.28 493.38L944.39 492.9M948.67 491.12L949.7 490.71L950.72 490.31L951.75 489.91L952.77 489.52L953.8 489.14L954.83 488.76L955.85 488.38L956.88 488.01M958.47 487.44L959.43 487.1L960.39 486.77L961.35 486.44L962.3 486.11L963.26 485.78L964.22 485.46L965.18 491.68L966.14 503.57M971.74 539L972.68 541.85L973.62 544.36L974.56 546.59L975.49 548.57L976.43 550.31L977.37 551.86M978.73 553.79L979.79 555.07L980.84 556.18L981.9 557.15L982.95 558L984.01 558.74L985.06 559.38L986.12 559.94L987.17 560.43M999.66 563.11L1000.69 563.19L1001.72 560.29L1002.75 556.88L1003.78 553.64L1004.8 550.57L1005.83 547.64L1006.86 544.87M1014.42 528.21L1015.45 526.38L1016.47 524.63L1017.5 522.96L1018.52 521.37L1019.55 519.85L1020.57 518.4M1022.33 516.06L1023.21 514.95L1024.09 513.88L1024.97 512.85L1025.85 511.86M1027.42 510.18L1028.44 509.14L1029.46 508.14L1030.48 507.18L1031.5 506.26L1032.53 505.37L1033.55 504.51L1034.57 503.69L1035.59 502.89M1041.75 498.62L1042.73 498.01L1043.7 497.42L1044.68 496.85M1049.26 494.36L1050.2 493.88L1051.14 493.41L1052.09 492.95L1053.03 492.5L1053.97 492.06L1054.92 491.63L1055.86 491.2M1062.73 488.32L1063.65 487.96L1064.56 487.6L1065.47 487.25L1066.38 486.91L1067.3 486.56M1069.4 485.79L1070.45 485.41L1071.49 485.04M1077.19 495.48L1078.23 509L1079.26 521.73L1080.3 527.01L1081.33 531.63L1082.37 535.66L1083.41 539.19M1084.68 542.95L1085.59 545.25L1086.49 547.3L1087.4 549.12M1089.76 552.97L1090.7 554.21L1091.65 555.31L1092.59 556.28L1093.53 557.13L1094.47 557.89L1095.41 558.56L1096.36 559.16M1097.7 559.89L1098.8 560.4L1099.9 560.84L1101 561.22L1102.1 561.56L1103.2 561.84M1105.66 562.36L1106.61 562.51L1107.56 562.65L1108.51 562.78L1109.46 562.89L1110.42 562.98L1111.37 563.07L1112.32 563.14L1113.27 562.86L1114.22 559.39M1120.1 541.29L1121.11 538.68L1122.12 536.2L1123.13 533.83L1124.14 531.58L1125.14 529.44L1126.15 527.39M1133.19 515.52L1134.2 514.09L1135.22 512.73L1136.23 511.43L1137.25 510.18L1138.26 508.99L1139.27 507.84L1140.29 506.74L1141.3 505.68M1142.63 504.36L1143.68 503.36L1144.72 502.41L1145.77 501.49L1146.81 500.61L1147.86 499.76L1148.9 498.93L1149.95 498.14M1152.13 496.57L1153.19 495.85L1154.26 495.15M1155.9 494.1L1156.86 493.52L1157.81 492.96L1158.76 492.41L1159.71 491.87L1160.66 491.35L1161.61 490.84L1162.56 490.34L1163.52 489.85M1168.65 487.38L1169.5 487L1170.35 486.62M1177.23 483.76L1178.26 483.35L1179.29 482.96L1180.31 482.56L1181.34 482.18L1182.37 481.79L1183.39 481.42L1184.42 481.04L1185.45 480.67M1187.27 480.02L1188.21 491.89L1189.14 505.21L1190.08 518.52L1191.02 525.12L1191.95 529.53M1193.98 537.43L1195.04 540.82L1196.1 543.77L1197.17 546.34L1198.23 548.58L1199.29 550.53L1200.36 552.22M1201.76 554.13L1202.8 555.34L1203.83 556.38L1204.87 557.3L1205.9 558.11L1206.93 558.81M1208.36 559.63L1209.24 560.07L1210.13 560.46M1212.44 561.3L1213.45 561.59L1214.45 561.85L1215.45 562.07L1216.46 562.27L1217.46 562.44L1218.46 562.59L1219.47 562.73M1221.64 562.96L1222.75 563.06L1223.86 563.14L1224.98 562.47L1226.09 558.45M1227.09 555L1228.06 551.84L1229.04 548.83L1230.01 545.96L1230.98 543.23L1231.95 540.62L1232.92 538.14M1235.51 532.05L1236.51 529.89L1237.52 527.84L1238.52 525.88L1239.52 524.02L1240.52 522.23L1241.52 520.53L1242.52 518.9M1248.25 510.87L1249.3 509.6L1250.35 508.38L1251.39 507.22L1252.44 506.1L1253.49 505.03M1255.23 503.35L1256.23 502.43L1257.23 501.55L1258.23 500.7L1259.23 499.87L1260.22 499.08L1261.22 498.31M1263.33 496.78L1264.41 496.03L1265.49 495.31L1266.56 494.61L1267.64 493.93M1269.04 493.08L1270.1 492.47L1271.16 491.86L1272.22 491.28L1273.27 490.71L1274.33 490.15L1275.39 489.61L1276.45 489.08L1277.5 488.56M1278.82 487.93L1279.86 487.45L1280.9 486.98M1286.97 484.38L1287.92 483.99L1288.86 483.62L1289.81 483.24L1290.75 482.88L1291.7 482.51L1292.64 482.15L1293.59 481.8M1295.06 481.25L1296.11 480.87L1297.16 480.49L1298.2 480.11L1299.25 491.06L1300.29 505.94M1302.44 526.69L1303.44 531.21L1304.44 535.18L1305.45 538.66L1306.45 541.72M1308.49 546.83L1309.34 548.59L1310.19 550.18L1311.05 551.59M1312.14 553.19L1313.35 554.72L1314.56 556.03M1321.28 560.49L1322.25 560.86L1323.21 561.2L1324.18 561.49L1325.15 561.75L1326.11 561.98M1327.91 562.33L1328.96 562.5L1330 562.65L1331.05 562.79L1332.09 562.9L1333.14 563L1334.18 563.09M1336.2 562.01L1337.22 558.33L1338.25 554.84L1339.27 551.53L1340.29 548.39L1341.32 545.4L1342.34 542.56L1343.36 539.86M1345.38 534.92L1346.44 532.51L1347.5 530.23L1348.56 528.06M1356.39 514.92L1357.45 513.48L1358.5 512.1L1359.55 510.79M1369.71 500.63L1370.71 499.83L1371.7 499.06L1372.69 498.32L1373.68 497.6" fill="none" stroke="#EAB839" stroke-width="1.1" stroke-linejoin="round"/><g fill="#EAB839"><circle cx="384" cy="490.98" r="2"/><circle cx="401.81" cy="483.99" r="2"/><circle cx="426.01" cy="559.68" r="2"/><circle cx="430.55" cy="561.5" r="2"/><circle cx="461.49" cy="515.14" r="2"/><circle cx="510.27" cy="481.95" r="2"/><circle cx="549" cy="562.83" r="2"/><circle cx="560.76" cy="540.84" r="2"/><circle cx="595.77" cy="499.33" r="2"/><circle cx="652.24" cy="560.75" r="2"/><circle cx="655.86" cy="561.9" r="2"/><circle cx="698.22" cy="502.53" r="2"/><circle cx="702.63" cy="499.22" r="2"/><circle cx="768.02" cy="562.13" r="2"/><circle cx="770.71" cy="562.62" r="2"/><circle cx="853.45" cy="521.01" r="2"/><circle cx="862.4" cy="550.34" r="2"/><circle cx="937.06" cy="496.3" r="2"/><circle cx="945.4" cy="492.47" r="2"/><circle cx="994.92" cy="562.55" r="2"/><circle cx="1057.91" cy="490.31" r="2"/><circle cx="1073.81" cy="484.22" r="2"/><circle cx="1116.72" cy="551.04" r="2"/><circle cx="1128.36" cy="523.24" r="2"/><circle cx="1165.1" cy="489.06" r="2"/><circle cx="1172.42" cy="485.73" r="2"/><circle cx="1244.82" cy="515.43" r="2"/><circle cx="1282.39" cy="486.31" r="2"/><circle cx="1316.97" cy="558.08" r="2"/><circle cx="1361.49" cy="508.52" r="2"/><circle cx="1365.22" cy="504.63" r="2"/><circle cx="1378.77" cy="494.24" r="2"/></g><path d="M384 508.59L385 508.3L386 508.02L387 507.75L388 507.48L389 507.22L390 506.97L391 506.72L392 506.47L393 506.23L394 505.99L395 505.75L396 505.52L397 505.29L398 505.07L399 504.85L400 504.63L401 504.41L402 504.2L403 503.99L404 503.78L405 503L406 510.62L407 517.31L408 523.19L409 528.35L410 532.88L411 536.86L412 540.36L413 543.43L414 546.13L415 548.49L416 550.57L417 552.4L418 554L419 555.41L420 556.65L421 557.74L422 558.69L423 559.53L424 560.26L425 560.91L426 561.48L427 561.97L428 562.41L429 562.8L430 563.13L431 563.43L432 563.69L433 563.92L434 564.12L435 564.3L436 564.45L437 564.59L438 564.71L439 564.81L440 564.9L441 564.99L441.2 565L442 562.61L443 559.77L444 557.08L445 554.53L446 552.12L447 549.84L448 547.68L449 545.63L450 543.69L451 541.85L452 540.1L453 538.45L454 536.88L455 535.39L456 533.97L457 532.63L458 531.35L459 530.14L460 528.98L461 527.88L462 526.84L463 525.84L464 524.89L465 523.99L466 523.13L467 522.31L468 521.52L469 520.77L470 520.05L471 519.37L472 518.71L473 518.08L474 517.48L475 516.9L476 516.34L477 515.81L478 515.3L479 514.8L480 514.33L481 513.87L482 513.43L483 513L484 512.59L485 512.19L486 511.81L487 511.44L488 511.08L489 510.73L490 510.39L491 510.05L492 509.73L493 509.42L494 509.12L495 508.82L496 508.53L497 508.24L498 507.97L499 507.7L500 507.43L501 507.17L502 506.92L503 506.67L504 506.42L505 506.18L506 505.94L507 505.71L508 505.48L509 505.25L510 505.03L511 504.8L512 504.59L513 504.37L514 504.16L515 503.95L516 503.74L516.8 503L517 504.6L518 512.03L519 518.55L520 524.28L521 529.31L522 533.73L523 537.61L524 541.02L525 544.01L526 546.64L527 548.94L528 550.97L529 552.75L530 554.31L531 555.69L532 556.89L533 557.95L534 558.88L535 559.7L536 560.41L537 561.04L538 561.6L539 562.08L540 562.51L541 562.88L542 563.21L543 563.5L544 563.75L545 563.98L546 564.17L547 564.34L548 564.5L549 564.63L550 564.74L551 564.85L552 564.94L552.8 565L553 564.39L554 561.46L555 558.68L556 556.05L557 553.56L558 551.2L559 548.97L560 546.85L561 544.85L562 542.95L563 541.15L564 539.44L565 537.83L566 536.29L567 534.83L568 533.45L569 532.13L570 530.88L571 529.69L572 528.56L573 527.49L574 526.46L575 525.49L576 524.56L577 523.67L578 522.83L579 522.02L580 521.25L581 520.52L582 519.81L583 519.14L584 518.5L585 517.88L586 517.29L587 516.72L588 516.17L589 515.65L590 515.15L591 514.66L592 514.2L593 513.75L594 513.31L595 512.89L596 512.49L597 512.1L598 511.72L599 511.35L600 511L601 510.65L602 510.32L603 509.99L604 509.68L605 509.37L606 509.07L607 508.77L608 508.49L609 508.21L610 507.94L611 507.67L612 507.41L613 507.15L614 506.9L615 506.65L616 506.41L617 506.17L618 505.93L619 505.7L620 505.48L621 505.25L622 505.03L623 504.81L624 504.6L625 504.38L626 504.17L627 503.96L628 503.76L629 503L630 510.63L631 517.32L632 523.2L633 528.37L634 532.91L635 536.89L636 540.39L637 543.46L638 546.16L639 548.53L640 550.61L641 552.44L642 554.04L643 555.45L644 556.69L645 557.78L646 558.73L647 559.57L648 560.31L649 560.95L650 561.52L651 562.02L652 562.46L653 562.84L654 563.18L655 563.48L656 563.74L657 563.97L658 564.17L659 564.34L660 564.5L661 564.63L662 564.75L663 564.86L664 564.95L664.6 565L665 563.79L666 560.89L667 558.13L668 555.53L669 553.07L670 550.73L671 548.52L672 546.43L673 544.45L674 542.57L675 540.78L676 539.09L677 537.49L678 535.97L679 534.52L680 533.15L681 531.85L682 530.61L683 529.43L684 528.31L685 527.24L686 526.23L687 525.26L688 524.34L689 523.46L690 522.62L691 521.82L692 521.05L693 520.32L694 519.62L695 518.95L696 518.31L697 517.7L698 517.11L699 516.55L700 516L701 515.48L702 514.98L703 514.5L704 514.03L705 513.59L706 513.15L707 512.74L708 512.33L709 511.94L710 511.56L711 511.2L712 510.84L713 510.5L714 510.16L715 509.84L716 509.52L717 509.21L718 508.91L719 508.62L720 508.33L721 508.05L722 507.78L723 507.51L724 507.25L725 506.99L726 506.74L727 506.49L728 506.25L729 506.01L730 505.77L731 505.54L732 505.31L733 505.08L734 504.86L735 504.64L736 504.42L737 504.21L738 504L739 503.79L740 503L741 510.62L742 517.31L743 523.19L744 528.35L745 532.89L746 536.87L747 540.36L748 543.44L749 546.13L750 548.5L751 550.58L752 552.41L753 554.01L754 555.42L755 556.66L756 557.74L757 558.7L758 559.53L759 560.27L760 560.92L761 561.48L762 561.98L763 562.42L764 562.8L765 563.14L766 563.44L767 563.7L768 563.93L769 564.13L770 564.3L771 564.46L772 564.6L773 564.71L774 564.82L775 564.91L776 564.99L776.1 565L777 562.32L778 559.49L779 556.81L780 554.27L781 551.87L782 549.6L783 547.45L784 545.41L785 543.47L786 541.64L787 539.9L788 538.25L789 536.69L790 535.2L791 533.79L792 532.45L793 531.18L794 529.97L795 528.82L796 527.72L797 526.68L798 525.69L799 524.74L800 523.84L801 522.98L802 522.15L803 521.37L804 520.62L805 519.9L806 519.22L807 518.56L808 517.93L809 517.33L810 516.75L811 516.19L812 515.66L813 515.14L814 514.65L815 514.17L816 513.72L817 513.27L818 512.85L819 512.43L820 512.03L821 511.65L822 511.27L823 510.91L824 510.56L825 510.22L826 509.88L827 509.56L828 509.25L829 508.94L830 508.64L831 508.35L832 508.06L833 507.78L834 507.51L835 507.24L836 506.98L837 506.72L838 506.47L839 506.22L840 505.98L841 505.74L842 505.5L843 505.27L844 505.04L845 504.81L846 504.59L847 504.37L848 504.15L849 503.93L850 503.72L850.5 503L851 506.93L852 514.05L853 520.31L854 525.81L855 530.64L856 534.88L857 538.6L858 541.87L859 544.74L860 547.26L861 549.48L862 551.42L863 553.13L864 554.63L865 555.95L866 557.11L867 558.12L868 559.01L869 559.8L870 560.49L871 561.09L872 561.62L873 562.09L874 562.5L875 562.86L876 563.17L877 563.45L878 563.69L879 563.91L880 564.09L881 564.26L882 564.4L883 564.53L884 564.64L885 564.74L886 564.83L887 564.9L888 564.97L888.5 565L889 563.49L890 560.61L891 557.87L892 555.28L893 552.84L894 550.52L895 548.32L896 546.24L897 544.27L898 542.4L899 540.63L900 538.95L901 537.35L902 535.84L903 534.4L904 533.04L905 531.75L906 530.51L907 529.34L908 528.23L909 527.17L910 526.16L911 525.2L912 524.28L913 523.41L914 522.58L915 521.78L916 521.02L917 520.3L918 519.6L919 518.94L920 518.3L921 517.69L922 517.11L923 516.55L924 516.01L925 515.49L926 514.99L927 514.51L928 514.05L929 513.61L930 513.18L931 512.76L932 512.36L933 511.97L934 511.6L935 511.24L936 510.88L937 510.54L938 510.21L939 509.89L940 509.57L941 509.27L942 508.97L943 508.68L944 508.39L945 508.11L946 507.84L947 507.58L948 507.32L949 507.06L950 506.81L951 506.56L952 506.32L953 506.08L954 505.85L955 505.62L956 505.39L957 505.17L958 504.95L959 504.73L960 504.52L961 504.3L962 504.09L963 503.89L964 503.68L964.6 503L965 506.17L966 513.4L967 519.76L968 525.33L969 530.23L970 534.54L971 538.32L972 541.64L973 544.55L974 547.11L975 549.36L976 551.33L977 553.07L978 554.59L979 555.93L980 557.1L981 558.13L982 559.04L983 559.83L984 560.53L985 561.14L986 561.68L987 562.16L988 562.57L989 562.94L990 563.26L991 563.54L992 563.79L993 564L994 564.19L995 564.36L996 564.51L997 564.64L998 564.75L999 564.85L1000 564.94L1000.8 565L1001 564.39L1002 561.45L1003 558.67L1004 556.04L1005 553.55L1006 551.19L1007 548.96L1008 546.84L1009 544.84L1010 542.93L1011 541.13L1012 539.42L1013 537.8L1014 536.27L1015 534.81L1016 533.42L1017 532.1L1018 530.85L1019 529.66L1020 528.53L1021 527.45L1022 526.42L1023 525.45L1024 524.52L1025 523.63L1026 522.78L1027 521.98L1028 521.2L1029 520.47L1030 519.76L1031 519.09L1032 518.44L1033 517.82L1034 517.23L1035 516.66L1036 516.11L1037 515.59L1038 515.08L1039 514.59L1040 514.13L1041 513.67L1042 513.24L1043 512.82L1044 512.41L1045 512.02L1046 511.64L1047 511.27L1048 510.91L1049 510.57L1050 510.23L1051 509.9L1052 509.58L1053 509.27L1054 508.97L1055 508.68L1056 508.39L1057 508.11L1058 507.83L1059 507.56L1060 507.3L1061 507.04L1062 506.79L1063 506.54L1064 506.29L1065 506.05L1066 505.82L1067 505.58L1068 505.35L1069 505.13L1070 504.91L1071 504.69L1072 504.47L1073 504.25L1074 504.04L1075 503.83L1076 503.62L1076.2 503L1077 509.17L1078 516.03L1079 522.06L1080 527.35L1081 532L1082 536.08L1083 539.67L1084 542.82L1085 545.58L1086 548.01L1087 550.14L1088 552.01L1089 553.66L1090 555.1L1091 556.37L1092 557.49L1093 558.46L1094 559.32L1095 560.08L1096 560.74L1097 561.32L1098 561.83L1099 562.28L1100 562.68L1101 563.02L1102 563.33L1103 563.59L1104 563.83L1105 564.03L1106 564.21L1107 564.37L1108 564.51L1109 564.64L1110 564.74L1111 564.84L1112 564.92L1113 564.99L1113.1 565L1114 562.32L1115 559.49L1116 556.81L1117 554.27L1118 551.87L1119 549.6L1120 547.44L1121 545.4L1122 543.47L1123 541.64L1124 539.9L1125 538.25L1126 536.68L1127 535.2L1128 533.79L1129 532.45L1130 531.17L1131 529.96L1132 528.81L1133 527.71L1134 526.67L1135 525.68L1136 524.73L1137 523.83L1138 522.96L1139 522.14L1140 521.36L1141 520.61L1142 519.89L1143 519.2L1144 518.54L1145 517.91L1146 517.31L1147 516.73L1148 516.17L1149 515.64L1150 515.13L1151 514.63L1152 514.16L1153 513.7L1154 513.25L1155 512.83L1156 512.41L1157 512.01L1158 511.63L1159 511.25L1160 510.89L1161 510.54L1162 510.19L1163 509.86L1164 509.54L1165 509.22L1166 508.91L1167 508.61L1168 508.32L1169 508.03L1170 507.76L1171 507.48L1172 507.21L1173 506.95L1174 506.69L1175 506.44L1176 506.19L1177 505.95L1178 505.71L1179 505.47L1180 505.24L1181 505.01L1182 504.78L1183 504.56L1184 504.33L1185 504.12L1186 503.9L1187 503.69L1187.3 503L1188 508.43L1189 515.38L1190 521.48L1191 526.84L1192 531.55L1193 535.68L1194 539.31L1195 542.5L1196 545.3L1197 547.76L1198 549.92L1199 551.81L1200 553.48L1201 554.94L1202 556.22L1203 557.35L1204 558.34L1205 559.21L1206 559.98L1207 560.65L1208 561.24L1209 561.75L1210 562.21L1211 562.61L1212 562.96L1213 563.27L1214 563.54L1215 563.77L1216 563.98L1217 564.17L1218 564.33L1219 564.47L1220 564.59L1221 564.7L1222 564.8L1223 564.88L1224 564.95L1224.7 565L1225 564.09L1226 561.16L1227 558.39L1228 555.77L1229 553.29L1230 550.94L1231 548.71L1232 546.61L1233 544.61L1234 542.71L1235 540.92L1236 539.21L1237 537.6L1238 536.06L1239 534.61L1240 533.22L1241 531.91L1242 530.66L1243 529.47L1244 528.34L1245 527.26L1246 526.24L1247 525.26L1248 524.33L1249 523.45L1250 522.6L1251 521.79L1252 521.02L1253 520.28L1254 519.58L1255 518.9L1256 518.25L1257 517.63L1258 517.04L1259 516.47L1260 515.92L1261 515.39L1262 514.88L1263 514.39L1264 513.92L1265 513.47L1266 513.03L1267 512.61L1268 512.2L1269 511.8L1270 511.42L1271 511.05L1272 510.69L1273 510.34L1274 510L1275 509.67L1276 509.35L1277 509.03L1278 508.73L1279 508.43L1280 508.14L1281 507.86L1282 507.58L1283 507.3L1284 507.04L1285 506.78L1286 506.52L1287 506.27L1288 506.02L1289 505.77L1290 505.53L1291 505.3L1292 505.06L1293 504.83L1294 504.61L1295 504.38L1296 504.16L1297 503.94L1298 503.73L1298.4 503L1299 507.68L1300 514.72L1301 520.91L1302 526.34L1303 531.1L1304 535.29L1305 538.97L1306 542.2L1307 545.03L1308 547.53L1309 549.71L1310 551.63L1311 553.32L1312 554.8L1313 556.1L1314 557.25L1315 558.25L1316 559.13L1317 559.9L1318 560.58L1319 561.18L1320 561.71L1321 562.17L1322 562.57L1323 562.93L1324 563.24L1325 563.51L1326 563.75L1327 563.96L1328 564.15L1329 564.31L1330 564.45L1331 564.58L1332 564.69L1333 564.79L1334 564.87L1335 564.95L1335.8 565L1336 564.39L1337 561.45L1338 558.67L1339 556.04L1340 553.55L1341 551.19L1342 548.96L1343 546.84L1344 544.84L1345 542.94L1346 541.14L1347 539.43L1348 537.81L1349 536.27L1350 534.81L1351 533.43L1352 532.11L1353 530.86L1354 529.67L1355 528.54L1356 527.46L1357 526.43L1358 525.46L1359 524.53L1360 523.64L1361 522.79L1362 521.99L1363 521.22L1364 520.48L1365 519.77L1366 519.1L1367 518.45L1368 517.84L1369 517.24L1370 516.67L1371 516.13L1372 515.6L1373 515.1L1374 514.61L1375 514.14L1376 513.69L1377 513.26L1378 512.84L1379 512.43L1380 512.04L1381 511.66L1382 511.29L1382 648.5L384 648.5Z" fill="#1F60C4" fill-opacity="0.1"/><path d="M384 508.59L385 508.3L386 508.02L387 507.75L388 507.48L389 507.22L390 506.97L391 506.72L392 506.47L393 506.23L394 505.99L395 505.75L396 505.52L397 505.29L398 505.07L399 504.85L400 504.63L401 504.41L402 504.2L403 503.99L404 503.78L405 503L406 510.62L407 517.31L408 523.19L409 528.35L410 532.88L411 536.86L412 540.36L413 543.43L414 546.13L415 548.49L416 550.57L417 552.4L418 554L419 555.41L420 556.65L421 557.74L422 558.69L423 559.53L424 560.26L425 560.91L426 561.48L427 561.97L428 562.41L429 562.8L430 563.13L431 563.43L432 563.69L433 563.92L434 564.12L435 564.3L436 564.45L437 564.59L438 564.71L439 564.81L440 564.9L441 564.99L441.2 565L442 562.61L443 559.77L444 557.08L445 554.53L446 552.12L447 549.84L448 547.68L449 545.63L450 543.69L451 541.85L452 540.1L453 538.45L454 536.88L455 535.39L456 533.97L457 532.63L458 531.35L459 530.14L460 528.98L461 527.88L462 526.84L463 525.84L464 524.89L465 523.99L466 523.13L467 522.31L468 521.52L469 520.77L470 520.05L471 519.37L472 518.71L473 518.08L474 517.48L475 516.9L476 516.34L477 515.81L478 515.3L479 514.8L480 514.33L481 513.87L482 513.43L483 513L484 512.59L485 512.19L486 511.81L487 511.44L488 511.08L489 510.73L490 510.39L491 510.05L492 509.73L493 509.42L494 509.12L495 508.82L496 508.53L497 508.24L498 507.97L499 507.7L500 507.43L501 507.17L502 506.92L503 506.67L504 506.42L505 506.18L506 505.94L507 505.71L508 505.48L509 505.25L510 505.03L511 504.8L512 504.59L513 504.37L514 504.16L515 503.95L516 503.74L516.8 503L517 504.6L518 512.03L519 518.55L520 524.28L521 529.31L522 533.73L523 537.61L524 541.02L525 544.01L526 546.64L527 548.94L528 550.97L529 552.75L530 554.31L531 555.69L532 556.89L533 557.95L534 558.88L535 559.7L536 560.41L537 561.04L538 561.6L539 562.08L540 562.51L541 562.88L542 563.21L543 563.5L544 563.75L545 563.98L546 564.17L547 564.34L548 564.5L549 564.63L550 564.74L551 564.85L552 564.94L552.8 565L553 564.39L554 561.46L555 558.68L556 556.05L557 553.56L558 551.2L559 548.97L560 546.85L561 544.85L562 542.95L563 541.15L564 539.44L565 537.83L566 536.29L567 534.83L568 533.45L569 532.13L570 530.88L571 529.69L572 528.56L573 527.49L574 526.46L575 525.49L576 524.56L577 523.67L578 522.83L579 522.02L580 521.25L581 520.52L582 519.81L583 519.14L584 518.5L585 517.88L586 517.29L587 516.72L588 516.17L589 515.65L590 515.15L591 514.66L592 514.2L593 513.75L594 513.31L595 512.89L596 512.49L597 512.1L598 511.72L599 511.35L600 511L601 510.65L602 510.32L603 509.99L604 509.68L605 509.37L606 509.07L607 508.77L608 508.49L609 508.21L610 507.94L611 507.67L612 507.41L613 507.15L614 506.9L615 506.65L616 506.41L617 506.17L618 505.93L619 505.7L620 505.48L621 505.25L622 505.03L623 504.81L624 504.6L625 504.38L626 504.17L627 503.96L628 503.76L629 503L630 510.63L631 517.32L632 523.2L633 528.37L634 532.91L635 536.89L636 540.39L637 543.46L638 546.16L639 548.53L640 550.61L641 552.44L642 554.04L643 555.45L644 556.69L645 557.78L646 558.73L647 559.57L648 560.31L649 560.95L650 561.52L651 562.02L652 562.46L653 562.84L654 563.18L655 563.48L656 563.74L657 563.97L658 564.17L659 564.34L660 564.5L661 564.63L662 564.75L663 564.86L664 564.95L664.6 565L665 563.79L666 560.89L667 558.13L668 555.53L669 553.07L670 550.73L671 548.52L672 546.43L673 544.45L674 542.57L675 540.78L676 539.09L677 537.49L678 535.97L679 534.52L680 533.15L681 531.85L682 530.61L683 529.43L684 528.31L685 527.24L686 526.23L687 525.26L688 524.34L689 523.46L690 522.62L691 521.82L692 521.05L693 520.32L694 519.62L695 518.95L696 518.31L697 517.7L698 517.11L699 516.55L700 516L701 515.48L702 514.98L703 514.5L704 514.03L705 513.59L706 513.15L707 512.74L708 512.33L709 511.94L710 511.56L711 511.2L712 510.84L713 510.5L714 510.16L715 509.84L716 509.52L717 509.21L718 508.91L719 508.62L720 508.33L721 508.05L722 507.78L723 507.51L724 507.25L725 506.99L726 506.74L727 506.49L728 506.25L729 506.01L730 505.77L731 505.54L732 505.31L733 505.08L734 504.86L735 504.64L736 504.42L737 504.21L738 504L739 503.79L740 503L741 510.62L742 517.31L743 523.19L744 528.35L745 532.89L746 536.87L747 540.36L748 543.44L749 546.13L750 548.5L751 550.58L752 552.41L753 554.01L754 555.42L755 556.66L756 557.74L757 558.7L758 559.53L759 560.27L760 560.92L761 561.48L762 561.98L763 562.42L764 562.8L765 563.14L766 563.44L767 563.7L768 563.93L769 564.13L770 564.3L771 564.46L772 564.6L773 564.71L774 564.82L775 564.91L776 564.99L776.1 565L777 562.32L778 559.49L779 556.81L780 554.27L781 551.87L782 549.6L783 547.45L784 545.41L785 543.47L786 541.64L787 539.9L788 538.25L789 536.69L790 535.2L791 533.79L792 532.45L793 531.18L794 529.97L795 528.82L796 527.72L797 526.68L798 525.69L799 524.74L800 523.84L801 522.98L802 522.15L803 521.37L804 520.62L805 519.9L806 519.22L807 518.56L808 517.93L809 517.33L810 516.75L811 516.19L812 515.66L813 515.14L814 514.65L815 514.17L816 513.72L817 513.27L818 512.85L819 512.43L820 512.03L821 511.65L822 511.27L823 510.91L824 510.56L825 510.22L826 509.88L827 509.56L828 509.25L829 508.94L830 508.64L831 508.35L832 508.06L833 507.78L834 507.51L835 507.24L836 506.98L837 506.72L838 506.47L839 506.22L840 505.98L841 505.74L842 505.5L843 505.27L844 505.04L845 504.81L846 504.59L847 504.37L848 504.15L849 503.93L850 503.72L850.5 503L851 506.93L852 514.05L853 520.31L854 525.81L855 530.64L856 534.88L857 538.6L858 541.87L859 544.74L860 547.26L861 549.48L862 551.42L863 553.13L864 554.63L865 555.95L866 557.11L867 558.12L868 559.01L869 559.8L870 560.49L871 561.09L872 561.62L873 562.09L874 562.5L875 562.86L876 563.17L877 563.45L878 563.69L879 563.91L880 564.09L881 564.26L882 564.4L883 564.53L884 564.64L885 564.74L886 564.83L887 564.9L888 564.97L888.5 565L889 563.49L890 560.61L891 557.87L892 555.28L893 552.84L894 550.52L895 548.32L896 546.24L897 544.27L898 542.4L899 540.63L900 538.95L901 537.35L902 535.84L903 534.4L904 533.04L905 531.75L906 530.51L907 529.34L908 528.23L909 527.17L910 526.16L911 525.2L912 524.28L913 523.41L914 522.58L915 521.78L916 521.02L917 520.3L918 519.6L919 518.94L920 518.3L921 517.69L922 517.11L923 516.55L924 516.01L925 515.49L926 514.99L927 514.51L928 514.05L929 513.61L930 513.18L931 512.76L932 512.36L933 511.97L934 511.6L935 511.24L936 510.88L937 510.54L938 510.21L939 509.89L940 509.57L941 509.27L942 508.97L943 508.68L944 508.39L945 508.11L946 507.84L947 507.58L948 507.32L949 507.06L950 506.81L951 506.56L952 506.32L953 506.08L954 505.85L955 505.62L956 505.39L957 505.17L958 504.95L959 504.73L960 504.52L961 504.3L962 504.09L963 503.89L964 503.68L964.6 503L965 506.17L966 513.4L967 519.76L968 525.33L969 530.23L970 534.54L971 538.32L972 541.64L973 544.55L974 547.11L975 549.36L976 551.33L977 553.07L978 554.59L979 555.93L980 557.1L981 558.13L982 559.04L983 559.83L984 560.53L985 561.14L986 561.68L987 562.16L988 562.57L989 562.94L990 563.26L991 563.54L992 563.79L993 564L994 564.19L995 564.36L996 564.51L997 564.64L998 564.75L999 564.85L1000 564.94L1000.8 565L1001 564.39L1002 561.45L1003 558.67L1004 556.04L1005 553.55L1006 551.19L1007 548.96L1008 546.84L1009 544.84L1010 542.93L1011 541.13L1012 539.42L1013 537.8L1014 536.27L1015 534.81L1016 533.42L1017 532.1L1018 530.85L1019 529.66L1020 528.53L1021 527.45L1022 526.42L1023 525.45L1024 524.52L1025 523.63L1026 522.78L1027 521.98L1028 521.2L1029 520.47L1030 519.76L1031 519.09L1032 518.44L1033 517.82L1034 517.23L1035 516.66L1036 516.11L1037 515.59L1038 515.08L1039 514.59L1040 514.13L1041 513.67L1042 513.24L1043 512.82L1044 512.41L1045 512.02L1046 511.64L1047 511.27L1048 510.91L1049 510.57L1050 510.23L1051 509.9L1052 509.58L1053 509.27L1054 508.97L1055 508.68L1056 508.39L1057 508.11L1058 507.83L1059 507.56L1060 507.3L1061 507.04L1062 506.79L1063 506.54L1064 506.29L1065 506.05L1066 505.82L1067 505.58L1068 505.35L1069 505.13L1070 504.91L1071 504.69L1072 504.47L1073 504.25L1074 504.04L1075 503.83L1076 503.62L1076.2 503L1077 509.17L1078 516.03L1079 522.06L1080 527.35L1081 532L1082 536.08L1083 539.67L1084 542.82L1085 545.58L1086 548.01L1087 550.14L1088 552.01L1089 553.66L1090 555.1L1091 556.37L1092 557.49L1093 558.46L1094 559.32L1095 560.08L1096 560.74L1097 561.32L1098 561.83L1099 562.28L1100 562.68L1101 563.02L1102 563.33L1103 563.59L1104 563.83L1105 564.03L1106 564.21L1107 564.37L1108 564.51L1109 564.64L1110 564.74L1111 564.84L1112 564.92L1113 564.99L1113.1 565L1114 562.32L1115 559.49L1116 556.81L1117 554.27L1118 551.87L1119 549.6L1120 547.44L1121 545.4L1122 543.47L1123 541.64L1124 539.9L1125 538.25L1126 536.68L1127 535.2L1128 533.79L1129 532.45L1130 531.17L1131 529.96L1132 528.81L1133 527.71L1134 526.67L1135 525.68L1136 524.73L1137 523.83L1138 522.96L1139 522.14L1140 521.36L1141 520.61L1142 519.89L1143 519.2L1144 518.54L1145 517.91L1146 517.31L1147 516.73L1148 516.17L1149 515.64L1150 515.13L1151 514.63L1152 514.16L1153 513.7L1154 513.25L1155 512.83L1156 512.41L1157 512.01L1158 511.63L1159 511.25L1160 510.89L1161 510.54L1162 510.19L1163 509.86L1164 509.54L1165 509.22L1166 508.91L1167 508.61L1168 508.32L1169 508.03L1170 507.76L1171 507.48L1172 507.21L1173 506.95L1174 506.69L1175 506.44L1176 506.19L1177 505.95L1178 505.71L1179 505.47L1180 505.24L1181 505.01L1182 504.78L1183 504.56L1184 504.33L1185 504.12L1186 503.9L1187 503.69L1187.3 503L1188 508.43L1189 515.38L1190 521.48L1191 526.84L1192 531.55L1193 535.68L1194 539.31L1195 542.5L1196 545.3L1197 547.76L1198 549.92L1199 551.81L1200 553.48L1201 554.94L1202 556.22L1203 557.35L1204 558.34L1205 559.21L1206 559.98L1207 560.65L1208 561.24L1209 561.75L1210 562.21L1211 562.61L1212 562.96L1213 563.27L1214 563.54L1215 563.77L1216 563.98L1217 564.17L1218 564.33L1219 564.47L1220 564.59L1221 564.7L1222 564.8L1223 564.88L1224 564.95L1224.7 565L1225 564.09L1226 561.16L1227 558.39L1228 555.77L1229 553.29L1230 550.94L1231 548.71L1232 546.61L1233 544.61L1234 542.71L1235 540.92L1236 539.21L1237 537.6L1238 536.06L1239 534.61L1240 533.22L1241 531.91L1242 530.66L1243 529.47L1244 528.34L1245 527.26L1246 526.24L1247 525.26L1248 524.33L1249 523.45L1250 522.6L1251 521.79L1252 521.02L1253 520.28L1254 519.58L1255 518.9L1256 518.25L1257 517.63L1258 517.04L1259 516.47L1260 515.92L1261 515.39L1262 514.88L1263 514.39L1264 513.92L1265 513.47L1266 513.03L1267 512.61L1268 512.2L1269 511.8L1270 511.42L1271 511.05L1272 510.69L1273 510.34L1274 510L1275 509.67L1276 509.35L1277 509.03L1278 508.73L1279 508.43L1280 508.14L1281 507.86L1282 507.58L1283 507.3L1284 507.04L1285 506.78L1286 506.52L1287 506.27L1288 506.02L1289 505.77L1290 505.53L1291 505.3L1292 505.06L1293 504.83L1294 504.61L1295 504.38L1296 504.16L1297 503.94L1298 503.73L1298.4 503L1299 507.68L1300 514.72L1301 520.91L1302 526.34L1303 531.1L1304 535.29L1305 538.97L1306 542.2L1307 545.03L1308 547.53L1309 549.71L1310 551.63L1311 553.32L1312 554.8L1313 556.1L1314 557.25L1315 558.25L1316 559.13L1317 559.9L1318 560.58L1319 561.18L1320 561.71L1321 562.17L1322 562.57L1323 562.93L1324 563.24L1325 563.51L1326 563.75L1327 563.96L1328 564.15L1329 564.31L1330 564.45L1331 564.58L1332 564.69L1333 564.79L1334 564.87L1335 564.95L1335.8 565L1336 564.39L1337 561.45L1338 558.67L1339 556.04L1340 553.55L1341 551.19L1342 548.96L1343 546.84L1344 544.84L1345 542.94L1346 541.14L1347 539.43L1348 537.81L1349 536.27L1350 534.81L1351 533.43L1352 532.11L1353 530.86L1354 529.67L1355 528.54L1356 527.46L1357 526.43L1358 525.46L1359 524.53L1360 523.64L1361 522.79L1362 521.99L1363 521.22L1364 520.48L1365 519.77L1366 519.1L1367 518.45L1368 517.84L1369 517.24L1370 516.67L1371 516.13L1372 515.6L1373 515.1L1374 514.61L1375 514.14L1376 513.69L1377 513.26L1378 512.84L1379 512.43L1380 512.04L1381 511.66L1382 511.29" fill="none" stroke="#1F60C4" stroke-width="1.1" stroke-linejoin="round"/><g font-size="12" fill="#c7d0d9" stroke="#c7d0d9" stroke-width="0.2"><text x="379.3" y="394.2" text-anchor="end" textLength="38.64" lengthAdjust="spacingAndGlyphs">15.0 °C</text><text x="379.3" y="437.25" text-anchor="end" textLength="38.64" lengthAdjust="spacingAndGlyphs">12.5 °C</text><text x="379.3" y="480.3" text-anchor="end" textLength="38.64" lengthAdjust="spacingAndGlyphs">10.0 °C</text><text x="379.3" y="523.35" text-anchor="end" textLength="31.9" lengthAdjust="spacingAndGlyphs">7.5 °C</text><text x="379.3" y="566.4" text-anchor="end" textLength="31.9" lengthAdjust="spacingAndGlyphs">5.0 °C</text><text x="379.3" y="609.45" text-anchor="end" textLength="31.9" lengthAdjust="spacingAndGlyphs">2.5 °C</text><text x="379.3" y="652.5" text-anchor="end" textLength="22" lengthAdjust="spacingAndGlyphs">0 °C</text><text x="1393" y="393.5" textLength="29" lengthAdjust="spacingAndGlyphs">100%</text><text x="1393" y="445.16" textLength="22.26" lengthAdjust="spacingAndGlyphs">80%</text><text x="1393" y="496.82" textLength="22.26" lengthAdjust="spacingAndGlyphs">60%</text><text x="1393" y="548.48" textLength="22.26" lengthAdjust="spacingAndGlyphs">40%</text><text x="1393" y="600.14" textLength="22.26" lengthAdjust="spacingAndGlyphs">20%</text><text x="1393" y="651.8" textLength="15.53" lengthAdjust="spacingAndGlyphs">0%</text><text x="414.5" y="665" text-anchor="middle">20:00</text><text x="497.69" y="665" text-anchor="middle">21:00</text><text x="580.88" y="665" text-anchor="middle">22:00</text><text x="664.07" y="665" text-anchor="middle">23:00</text><text x="747.26" y="665" text-anchor="middle">00:00</text><text x="830.45" y="665" text-anchor="middle">01:00</text><text x="913.64" y="665" text-anchor="middle">02:00</text><text x="996.83" y="665" text-anchor="middle">03:00</text><text x="1080.02" y="665" text-anchor="middle">04:00</text><text x="1163.21" y="665" text-anchor="middle">05:00</text><text x="1246.4" y="665" text-anchor="middle">06:00</text><text x="1329.59" y="665" text-anchor="middle">07:00</text><text transform="translate(331 526) rotate(-90)" text-anchor="middle">temps</text><text transform="translate(1429 526) rotate(90)" text-anchor="middle">hums</text></g></svg></div>
<div class="panel " style="left:311px;top:714px;width:1140px;height:120px"><div class="ptitle" style="left:560px">Scales</div><svg class="pg" width="1140" height="120" viewBox="311 714 1140 120"><path d="M355 760.5H1426" stroke="#c8c8c8" stroke-opacity="0.22" stroke-width="1"/><path d="M355 798.5H1426" stroke="#c8c8c8" stroke-opacity="0.22" stroke-width="1"/><path d="M388.5 760V801" stroke="#c8c8c8" stroke-opacity="0.22" stroke-width="1"/><path d="M478.5 760V801" stroke="#c8c8c8" stroke-opacity="0.22" stroke-width="1"/><path d="M567.5 760V801" stroke="#c8c8c8" stroke-opacity="0.22" stroke-width="1"/><path d="M656.5 760V801" stroke="#c8c8c8" stroke-opacity="0.22" stroke-width="1"/><path d="M745.5 760V801" stroke="#c8c8c8" stroke-opacity="0.22" stroke-width="1"/><path d="M834.5 760V801" stroke="#c8c8c8" stroke-opacity="0.22" stroke-width="1"/><path d="M924.5 760V801" stroke="#c8c8c8" stroke-opacity="0.22" stroke-width="1"/><path d="M1013.5 760V801" stroke="#c8c8c8" stroke-opacity="0.22" stroke-width="1"/><path d="M1102.5 760V801" stroke="#c8c8c8" stroke-opacity="0.22" stroke-width="1"/><path d="M1191.5 760V801" stroke="#c8c8c8" stroke-opacity="0.22" stroke-width="1"/><path d="M1280.5 760V801" stroke="#c8c8c8" stroke-opacity="0.22" stroke-width="1"/><path d="M1369.5 760V801" stroke="#c8c8c8" stroke-opacity="0.22" stroke-width="1"/><g font-size="12" fill="#c7d0d9" stroke="#c7d0d9" stroke-width="0.2"><text x="349.8" y="764" text-anchor="end" textLength="29.27" lengthAdjust="spacingAndGlyphs">20 kg</text><text x="349.8" y="802" text-anchor="end" textLength="29.27" lengthAdjust="spacingAndGlyphs">15 kg</text></g></svg></div>
<div class="legend" style="left:0;top:0">
<span class="i" style="left:332.4px;top:344.5px;background:#7f8794"></span><span class="t dim" style="left:350px;top:337px">temperatures.temp int</span>
<span class="i" style="left:479.1px;top:344.5px;background:#C4162A"></span><span class="t" style="left:497.4px;top:337px">temperatures.temp1</span>
<span class="i" style="left:617.6px;top:344.5px;background:#F2495C"></span><span class="t" style="left:635.3px;top:337px">temperatures.temp2</span>
<span class="i" style="left:755.5px;top:344.5px;background:#E0B400"></span><span class="t" style="left:773.1px;top:337px">BT Temp</span>
<span class="i" style="left:1264.5px;top:344.5px;background:#1f78b4"></span><span class="t dim" style="left:1281.8px;top:337px">BT Hum</span>
<span class="i" style="left:1336.7px;top:344.5px;background:#1F60C4"></span><span class="t dim" style="left:1354px;top:337px">humidity.hum int</span>
<span class="i" style="left:1264.5px;top:686.5px;background:#EAB839"></span><span class="t" style="left:1281.8px;top:679px">BT Hum</span>
<span class="i" style="left:1336.7px;top:686.5px;background:#1F60C4"></span><span class="t" style="left:1354px;top:679px">humidity.hum int</span>
</div>
<div class="tooltip" style="position:absolute;left:1212px;top:127px;width:204px;height:92px;background:#141414;border-radius:3px;font-size:12px;color:#d8d9da;z-index:5">
<div style="position:absolute;left:0;right:0;top:8px;text-align:center;font-weight:bold;line-height:16px">2020-10-29 05:18:20</div>
<div class="tr" style="top:29px"><i style="background:#C4162A"></i><span>temperatures.temp1:</span><b>6.22 °C</b></div>
<div class="tr" style="top:47px"><i style="background:#F2495C"></i><span>temperatures.temp2:</span><b>6.32 °C</b></div>
<div class="tr" style="top:65px"><i style="background:#FADE2A"></i><span>BT Temp:</span><b>3.50 °C</b></div>
</div>

<div class="ctx" style="position:absolute;left:1383px;top:315px;width:200px;height:29px;background:#141619;border-radius:2px;box-shadow:0 2px 6px 1px rgba(0,0,0,.85);z-index:6;font-size:14px;color:#c7d0d9">
<svg style="position:absolute;left:11px;top:7.5px" width="15" height="14" viewBox="0 0 15 14"><path d="M1.5 0.9H12.9Q13.3 0.9 13.3 1.3V11.9L10.3 9.4H1.5Q1.1 9.4 1.1 9V1.3Q1.1 0.9 1.5 0.9Z" fill="none" stroke="#8e9297" stroke-width="1.3" stroke-linejoin="round"/></svg>
<span style="position:absolute;left:36px;top:6px;line-height:16px">Add annotation</span></div>
<svg style="position:absolute;left:1174px;top:109px;z-index:7" width="26" height="26" viewBox="0 0 26 26"><path d="M13 0.7V25.3M0.7 13H25.3" stroke="#fff" stroke-width="2.4"/></svg>
</body></html>
